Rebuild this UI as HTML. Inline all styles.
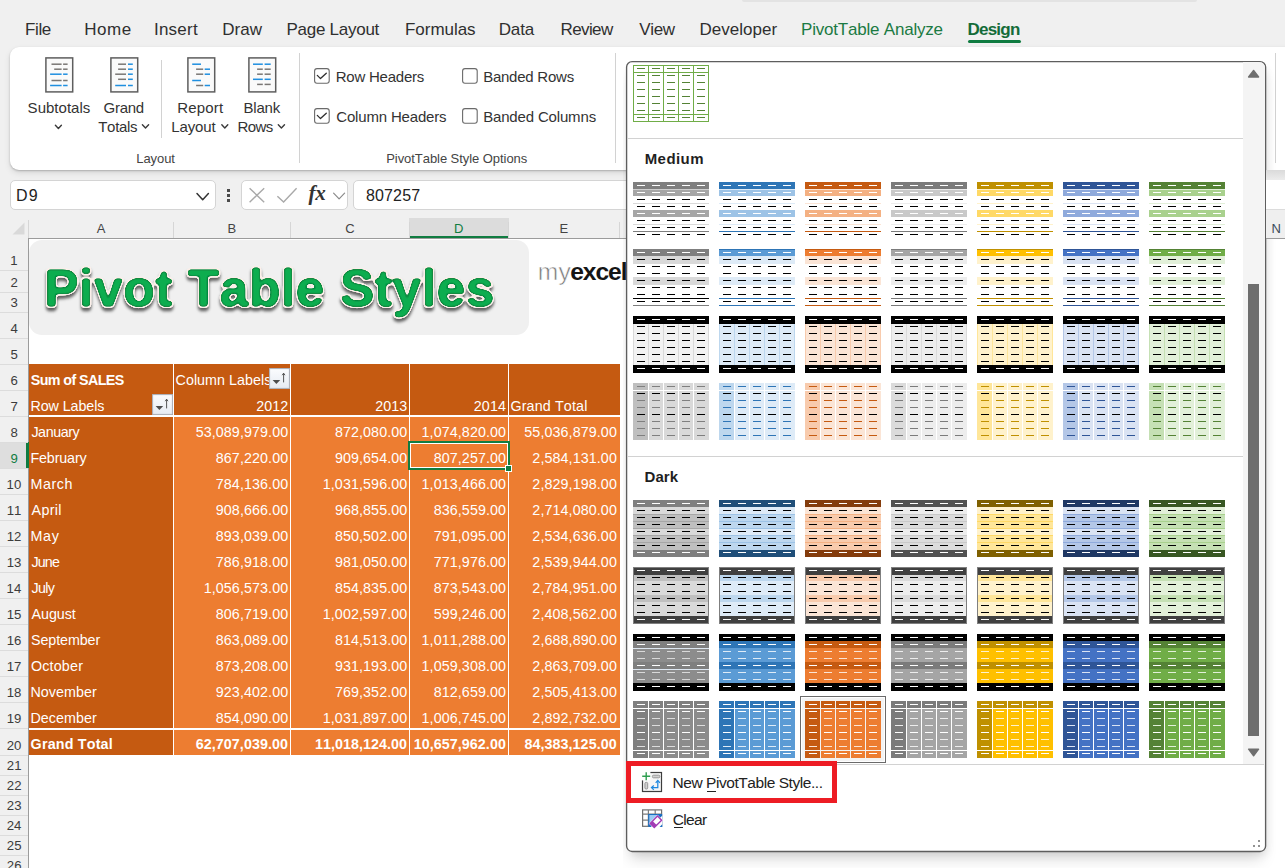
<!DOCTYPE html>
<html><head><meta charset="utf-8"><title>Pivot Table Styles</title>
<style>
html,body{margin:0;padding:0}
html{width:1285px;height:868px;overflow:hidden}
body{width:1285px;height:868px;overflow:hidden;background:#f0f0f0;position:relative;font-family:"Liberation Sans",sans-serif;font-kerning:none}
.t{position:absolute;white-space:pre;font-kerning:none!important;font-variant-ligatures:none!important}
.b{position:absolute;box-sizing:border-box}
svg{position:absolute;overflow:visible}
</style></head><body><div id="root" style="position:absolute;left:0;top:0;width:1285px;height:868px;overflow:hidden;background:#f0f0f0">

<div class="t" style="left:25.11px;top:19.11px;font:17px/22px 'Liberation Sans',sans-serif;color:#2f2f2f;letter-spacing:-0.414px;">File</div>
<div class="t" style="left:84.31px;top:19.11px;font:17px/22px 'Liberation Sans',sans-serif;color:#2f2f2f;letter-spacing:0.534px;">Home</div>
<div class="t" style="left:154.03px;top:19.11px;font:17px/22px 'Liberation Sans',sans-serif;color:#2f2f2f;letter-spacing:0.215px;">Insert</div>
<div class="t" style="left:222.21px;top:19.11px;font:17px/22px 'Liberation Sans',sans-serif;color:#2f2f2f;letter-spacing:0.028px;">Draw</div>
<div class="t" style="left:286.41px;top:19.11px;font:17px/22px 'Liberation Sans',sans-serif;color:#2f2f2f;letter-spacing:-0.255px;">Page Layout</div>
<div class="t" style="left:405.01px;top:19.11px;font:17px/22px 'Liberation Sans',sans-serif;color:#2f2f2f;letter-spacing:-0.034px;">Formulas</div>
<div class="t" style="left:498.71px;top:19.11px;font:17px/22px 'Liberation Sans',sans-serif;color:#2f2f2f;letter-spacing:-0.138px;">Data</div>
<div class="t" style="left:560.61px;top:19.11px;font:17px/22px 'Liberation Sans',sans-serif;color:#2f2f2f;letter-spacing:-0.637px;">Review</div>
<div class="t" style="left:639.23px;top:19.11px;font:17px/22px 'Liberation Sans',sans-serif;color:#2f2f2f;letter-spacing:-0.338px;">View</div>
<div class="t" style="left:699.51px;top:19.11px;font:17px/22px 'Liberation Sans',sans-serif;color:#2f2f2f;letter-spacing:0.024px;">Developer</div>
<div class="t" style="left:801.01px;top:19.11px;font:17px/22px 'Liberation Sans',sans-serif;color:#1b7a43;letter-spacing:-0.204px;">PivotTable Analyze</div>
<div class="t" style="left:967.46px;top:19.11px;font:bold 17px/22px 'Liberation Sans',sans-serif;color:#146c39;letter-spacing:-0.757px;">Design</div>
<div class="b" style="left:968px;top:40px;width:53px;height:3px;background:#107c41;border-radius:1.5px"></div>
<div class="b" style="left:742px;top:0px;width:455px;height:1.5px;background:#e3e3e3;border-radius:0 0 2px 2px"></div>
<div class="b" style="left:10px;top:47px;width:1300px;height:123px;background:#fff;border-radius:9px 0 0 9px;box-shadow:0 1px 2px rgba(0,0,0,.22),0 3px 6px rgba(0,0,0,.10)"></div>
<div class="b" style="left:161px;top:60px;width:1px;height:78px;background:#d2d2d2"></div>
<div class="b" style="left:299px;top:53px;width:1px;height:110px;background:#d2d2d2"></div>
<div class="b" style="left:615px;top:53px;width:1px;height:110px;background:#d2d2d2"></div>
<div class="b" style="left:1275px;top:53px;width:1px;height:110px;background:#d2d2d2"></div>
<svg style="left:45px;top:57px" width="29" height="36" viewBox="0 0 29 36"><rect x="0.9" y="0.9" width="26.8" height="34" fill="#fafafa" stroke="#5e5e5e" stroke-width="1.5"/><rect x="6.5" y="6.45" width="10.1" height="1.5" fill="#7a7775"/><rect x="18.1" y="6.45" width="4.5" height="1.5" fill="#7a7775"/><rect x="9.2" y="11.45" width="7.4" height="1.5" fill="#7a7775"/><rect x="18.1" y="11.45" width="4.5" height="1.5" fill="#7a7775"/><rect x="5.1" y="16.45" width="11.5" height="1.5" fill="#1f8fe0"/><rect x="18.1" y="16.45" width="4.5" height="1.5" fill="#1f8fe0"/><rect x="6.5" y="22.75" width="10.1" height="1.5" fill="#7a7775"/><rect x="18.1" y="22.75" width="4.5" height="1.5" fill="#7a7775"/><rect x="5.1" y="27.75" width="11.5" height="1.5" fill="#1f8fe0"/><rect x="18.1" y="27.75" width="4.5" height="1.5" fill="#1f8fe0"/></svg>
<svg style="left:110px;top:57px" width="29" height="36" viewBox="0 0 29 36"><rect x="0.9" y="0.9" width="26.8" height="34" fill="#fafafa" stroke="#5e5e5e" stroke-width="1.5"/><rect x="8.1" y="6.45" width="7.9" height="1.5" fill="#7a7775"/><rect x="18.0" y="6.45" width="4.8" height="1.5" fill="#1f8fe0"/><rect x="8.1" y="11.45" width="7.9" height="1.5" fill="#7a7775"/><rect x="18.0" y="11.45" width="4.8" height="1.5" fill="#1f8fe0"/><rect x="5.2" y="16.45" width="10.8" height="1.5" fill="#7a7775"/><rect x="18.0" y="16.45" width="4.8" height="1.5" fill="#1f8fe0"/><rect x="8.1" y="21.55" width="7.9" height="1.5" fill="#7a7775"/><rect x="18.0" y="21.55" width="4.8" height="1.5" fill="#1f8fe0"/><rect x="5.2" y="27.75" width="10.8" height="1.5" fill="#1f8fe0"/><rect x="18.0" y="27.75" width="4.8" height="1.5" fill="#1f8fe0"/></svg>
<svg style="left:187px;top:57px" width="29" height="36" viewBox="0 0 29 36"><rect x="0.9" y="0.9" width="26.8" height="34" fill="#fafafa" stroke="#5e5e5e" stroke-width="1.5"/><rect x="5.2" y="6.45" width="8.8" height="1.5" fill="#1f8fe0"/><rect x="9.1" y="11.45" width="7.1" height="1.5" fill="#7a7775"/><rect x="17.7" y="11.45" width="5.3" height="1.5" fill="#1f8fe0"/><rect x="9.1" y="16.45" width="7.1" height="1.5" fill="#7a7775"/><rect x="17.7" y="16.45" width="5.3" height="1.5" fill="#1f8fe0"/><rect x="5.2" y="22.75" width="8.8" height="1.5" fill="#1f8fe0"/><rect x="9.1" y="27.75" width="7.1" height="1.5" fill="#7a7775"/><rect x="17.7" y="27.75" width="5.3" height="1.5" fill="#1f8fe0"/></svg>
<svg style="left:248px;top:57px" width="29" height="36" viewBox="0 0 29 36"><rect x="0.9" y="0.9" width="26.8" height="34" fill="#fafafa" stroke="#5e5e5e" stroke-width="1.5"/><rect x="5.0" y="6.45" width="9.8" height="1.5" fill="#1f8fe0"/><rect x="16.6" y="6.45" width="6.1" height="1.5" fill="#1f8fe0"/><rect x="9.1" y="11.45" width="5.7" height="1.5" fill="#7a7775"/><rect x="16.6" y="11.45" width="6.1" height="1.5" fill="#7a7775"/><rect x="9.1" y="16.45" width="5.7" height="1.5" fill="#7a7775"/><rect x="16.6" y="16.45" width="6.1" height="1.5" fill="#7a7775"/><rect x="5.0" y="21.55" width="9.8" height="1.5" fill="#1f8fe0"/><rect x="16.6" y="21.55" width="6.1" height="1.5" fill="#1f8fe0"/><rect x="9.1" y="26.65" width="5.7" height="1.5" fill="#7a7775"/><rect x="16.6" y="26.65" width="6.1" height="1.5" fill="#7a7775"/></svg>
<div class="t" style="left:27.62px;top:97.80px;font:15px/20px 'Liberation Sans',sans-serif;color:#333;letter-spacing:0.023px;">Subtotals</div>
<div class="t" style="left:103.55px;top:97.80px;font:15px/20px 'Liberation Sans',sans-serif;color:#333;letter-spacing:-0.267px;">Grand</div>
<div class="t" style="left:98.26px;top:117.30px;font:15px/20px 'Liberation Sans',sans-serif;color:#333;letter-spacing:-0.314px;">Totals</div>
<div class="t" style="left:177.27px;top:97.80px;font:15px/20px 'Liberation Sans',sans-serif;color:#333;letter-spacing:0.164px;">Report</div>
<div class="t" style="left:171.27px;top:117.30px;font:15px/20px 'Liberation Sans',sans-serif;color:#333;letter-spacing:-0.139px;">Layout</div>
<div class="t" style="left:243.47px;top:97.80px;font:15px/20px 'Liberation Sans',sans-serif;color:#333;letter-spacing:-0.178px;">Blank</div>
<div class="t" style="left:237.47px;top:117.30px;font:15px/20px 'Liberation Sans',sans-serif;color:#333;letter-spacing:-0.545px;">Rows</div>
<svg style="left:0;top:0" width="1" height="1"><path d="M55.4 125.2L58.4 128.4L61.4 125.2" fill="none" stroke="#3a3a3a" stroke-width="1.4" stroke-linecap="round" stroke-linejoin="round"/></svg>
<svg style="left:0;top:0" width="1" height="1"><path d="M142.4 124.8L145.5 128L148.6 124.8" fill="none" stroke="#3a3a3a" stroke-width="1.4" stroke-linecap="round" stroke-linejoin="round"/></svg>
<svg style="left:0;top:0" width="1" height="1"><path d="M221.8 124.8L224.8 128L227.8 124.8" fill="none" stroke="#3a3a3a" stroke-width="1.4" stroke-linecap="round" stroke-linejoin="round"/></svg>
<svg style="left:0;top:0" width="1" height="1"><path d="M278.3 124.8L281.4 128L284.5 124.8" fill="none" stroke="#3a3a3a" stroke-width="1.4" stroke-linecap="round" stroke-linejoin="round"/></svg>
<div class="t" style="left:136.33px;top:150.00px;font:13px/17px 'Liberation Sans',sans-serif;color:#444;letter-spacing:-0.094px;">Layout</div>
<div class="t" style="left:386.23px;top:150.00px;font:13px/17px 'Liberation Sans',sans-serif;color:#444;letter-spacing:-0.057px;">PivotTable Style Options</div>
<svg style="left:314px;top:68.2px" width="16" height="16" viewBox="0 0 16 16"><rect x="0.6" y="0.6" width="14.6" height="14.6" rx="2.4" fill="#fff" stroke="#6a6a6a" stroke-width="1.1"/><path d="M3.3 7.4L6.5 10.6L12.3 5.2" fill="none" stroke="#2f2f2f" stroke-width="1.3" stroke-linecap="round" stroke-linejoin="round"/></svg>
<svg style="left:314px;top:108.2px" width="16" height="16" viewBox="0 0 16 16"><rect x="0.6" y="0.6" width="14.6" height="14.6" rx="2.4" fill="#fff" stroke="#6a6a6a" stroke-width="1.1"/><path d="M3.3 7.4L6.5 10.6L12.3 5.2" fill="none" stroke="#2f2f2f" stroke-width="1.3" stroke-linecap="round" stroke-linejoin="round"/></svg>
<svg style="left:462px;top:68.2px" width="16" height="16" viewBox="0 0 16 16"><rect x="0.6" y="0.6" width="14.6" height="14.6" rx="2.4" fill="#fff" stroke="#6a6a6a" stroke-width="1.1"/></svg>
<svg style="left:462px;top:108.2px" width="16" height="16" viewBox="0 0 16 16"><rect x="0.6" y="0.6" width="14.6" height="14.6" rx="2.4" fill="#fff" stroke="#6a6a6a" stroke-width="1.1"/></svg>
<div class="t" style="left:335.77px;top:66.80px;font:15px/20px 'Liberation Sans',sans-serif;color:#333;letter-spacing:-0.230px;">Row Headers</div>
<div class="t" style="left:336.24px;top:106.80px;font:15px/20px 'Liberation Sans',sans-serif;color:#333;letter-spacing:-0.173px;">Column Headers</div>
<div class="t" style="left:483.17px;top:66.80px;font:15px/20px 'Liberation Sans',sans-serif;color:#333;letter-spacing:-0.242px;">Banded Rows</div>
<div class="t" style="left:483.17px;top:106.80px;font:15px/20px 'Liberation Sans',sans-serif;color:#333;letter-spacing:-0.161px;">Banded Columns</div>
<div class="b" style="left:10px;top:180px;width:206px;height:29.5px;background:#fff;border:1px solid #d4d4d4;border-radius:5px"></div>
<div class="t" style="left:15.89px;top:184.66px;font:16px/21px 'Liberation Sans',sans-serif;color:#222;letter-spacing:1.417px;">D9</div>
<svg style="left:0;top:0" width="1" height="1"><path d="M197 193.6L202.7 199.8L208.4 193.6" fill="none" stroke="#333" stroke-width="1.5" stroke-linecap="round" stroke-linejoin="round"/></svg>
<div class="b" style="left:227px;top:189.3px;width:3px;height:3px;background:#4a4a4a"></div>
<div class="b" style="left:227px;top:194.2px;width:3px;height:3px;background:#4a4a4a"></div>
<div class="b" style="left:227px;top:199.1px;width:3px;height:3px;background:#4a4a4a"></div>
<div class="b" style="left:241px;top:180px;width:107px;height:29.5px;background:#fff;border:1px solid #d4d4d4;border-radius:5px"></div>
<svg style="left:0;top:0" width="1" height="1"><path d="M249.6 188.2L264.2 202.2M264.2 188.2L249.6 202.2" stroke="#a9a9a9" stroke-width="1.4" fill="none"/><path d="M277.4 196.2L283.6 202L296.6 188.2" stroke="#a9a9a9" stroke-width="1.4" fill="none"/></svg>
<div class="t" style="left:308.40px;top:179.71px;font:italic bold 21px/27px 'Liberation Serif',serif;color:#333;letter-spacing:-0.180px;">fx</div>
<svg style="left:0;top:0" width="1" height="1"><path d="M333.6 193.2L339.1 198.8L344.6 193.2" fill="none" stroke="#8a8a8a" stroke-width="1.2" stroke-linecap="round" stroke-linejoin="round"/></svg>
<div class="b" style="left:353px;top:180px;width:940px;height:29.5px;background:#fff;border:1px solid #d4d4d4;border-radius:5px"></div>
<div class="t" style="left:365.90px;top:184.76px;font:16px/21px 'Liberation Sans',sans-serif;color:#222;letter-spacing:0.162px;">807257</div>
<div class="b" style="left:29px;top:239px;width:1260px;height:640px;background:#fff"></div>
<div class="b" style="left:409px;top:218px;width:100px;height:20px;background:#dcdcdc"></div>
<div class="b" style="left:409px;top:236px;width:100px;height:3px;background:#107c41"></div>
<div class="t" style="left:96.66px;top:220.20px;font:13px/17px 'Liberation Sans',sans-serif;color:#444;letter-spacing:0.000px;">A</div>
<div class="t" style="left:227.47px;top:220.20px;font:13px/17px 'Liberation Sans',sans-serif;color:#444;letter-spacing:0.000px;">B</div>
<div class="t" style="left:345.22px;top:220.20px;font:13px/17px 'Liberation Sans',sans-serif;color:#444;letter-spacing:0.000px;">C</div>
<div class="t" style="left:559.41px;top:220.20px;font:13px/17px 'Liberation Sans',sans-serif;color:#444;letter-spacing:0.000px;">E</div>
<div class="t" style="left:454.08px;top:220.20px;font:13px/17px 'Liberation Sans',sans-serif;color:#107c41;letter-spacing:0.000px;">D</div>
<div class="b" style="left:173px;top:222px;width:1px;height:16px;background:#d6d6d6"></div>
<div class="b" style="left:290px;top:222px;width:1px;height:16px;background:#d6d6d6"></div>
<div class="b" style="left:409px;top:222px;width:1px;height:16px;background:#d6d6d6"></div>
<div class="b" style="left:508px;top:222px;width:1px;height:16px;background:#d6d6d6"></div>
<div class="b" style="left:619px;top:222px;width:1px;height:16px;background:#d6d6d6"></div>
<div class="b" style="left:28px;top:238px;width:600px;height:1px;background:#9b9b9b"></div>
<div class="b" style="left:28px;top:238px;width:1px;height:640px;background:#9b9b9b"></div>
<div class="b" style="left:28px;top:220px;width:1px;height:18px;background:#d6d6d6"></div>
<svg style="left:0;top:0" width="1" height="1"><path d="M12.5 234.5L24.5 234.5L24.5 222.5Z" fill="#d9d9d9"/></svg>
<div class="b" style="left:0px;top:442px;width:28px;height:26px;background:#dedede"></div>
<div class="b" style="left:26px;top:442px;width:3px;height:26px;background:#107c41"></div>
<div class="b" style="left:0px;top:270px;width:28px;height:1px;background:#dcdcdc"></div>
<div class="t" style="left:10.35px;top:251.73px;font:13.2px/17px 'Liberation Sans',sans-serif;color:#3c3c3c;letter-spacing:-0.000px;">1</div>
<div class="b" style="left:0px;top:292px;width:28px;height:1px;background:#dcdcdc"></div>
<div class="t" style="left:10.53px;top:273.73px;font:13.2px/17px 'Liberation Sans',sans-serif;color:#3c3c3c;letter-spacing:-0.000px;">2</div>
<div class="b" style="left:0px;top:312px;width:28px;height:1px;background:#dcdcdc"></div>
<div class="t" style="left:10.57px;top:293.73px;font:13.2px/17px 'Liberation Sans',sans-serif;color:#3c3c3c;letter-spacing:-0.000px;">3</div>
<div class="b" style="left:0px;top:338px;width:28px;height:1px;background:#dcdcdc"></div>
<div class="t" style="left:10.57px;top:319.73px;font:13.2px/17px 'Liberation Sans',sans-serif;color:#3c3c3c;letter-spacing:-0.000px;">4</div>
<div class="b" style="left:0px;top:364px;width:28px;height:1px;background:#dcdcdc"></div>
<div class="t" style="left:10.54px;top:345.73px;font:13.2px/17px 'Liberation Sans',sans-serif;color:#3c3c3c;letter-spacing:-0.000px;">5</div>
<div class="b" style="left:0px;top:390px;width:28px;height:1px;background:#dcdcdc"></div>
<div class="t" style="left:10.48px;top:371.73px;font:13.2px/17px 'Liberation Sans',sans-serif;color:#3c3c3c;letter-spacing:0.000px;">6</div>
<div class="b" style="left:0px;top:416px;width:28px;height:1px;background:#dcdcdc"></div>
<div class="t" style="left:10.52px;top:397.73px;font:13.2px/17px 'Liberation Sans',sans-serif;color:#3c3c3c;letter-spacing:-0.000px;">7</div>
<div class="b" style="left:0px;top:442px;width:28px;height:1px;background:#dcdcdc"></div>
<div class="t" style="left:10.53px;top:423.73px;font:13.2px/17px 'Liberation Sans',sans-serif;color:#3c3c3c;letter-spacing:-0.000px;">8</div>
<div class="b" style="left:0px;top:468px;width:28px;height:1px;background:#dcdcdc"></div>
<div class="t" style="left:10.53px;top:449.73px;font:13.2px/17px 'Liberation Sans',sans-serif;color:#107c41;letter-spacing:-0.000px;">9</div>
<div class="b" style="left:0px;top:494px;width:28px;height:1px;background:#dcdcdc"></div>
<div class="t" style="left:6.61px;top:475.73px;font:13.2px/17px 'Liberation Sans',sans-serif;color:#3c3c3c;letter-spacing:-0.000px;">10</div>
<div class="b" style="left:0px;top:520px;width:28px;height:1px;background:#dcdcdc"></div>
<div class="t" style="left:6.68px;top:501.73px;font:13.2px/17px 'Liberation Sans',sans-serif;color:#3c3c3c;letter-spacing:-0.000px;">11</div>
<div class="b" style="left:0px;top:546px;width:28px;height:1px;background:#dcdcdc"></div>
<div class="t" style="left:6.69px;top:527.73px;font:13.2px/17px 'Liberation Sans',sans-serif;color:#3c3c3c;letter-spacing:0.000px;">12</div>
<div class="b" style="left:0px;top:572px;width:28px;height:1px;background:#dcdcdc"></div>
<div class="t" style="left:6.65px;top:553.73px;font:13.2px/17px 'Liberation Sans',sans-serif;color:#3c3c3c;letter-spacing:-0.000px;">13</div>
<div class="b" style="left:0px;top:598px;width:28px;height:1px;background:#dcdcdc"></div>
<div class="t" style="left:6.55px;top:579.73px;font:13.2px/17px 'Liberation Sans',sans-serif;color:#3c3c3c;letter-spacing:-0.000px;">14</div>
<div class="b" style="left:0px;top:624px;width:28px;height:1px;background:#dcdcdc"></div>
<div class="t" style="left:6.63px;top:605.73px;font:13.2px/17px 'Liberation Sans',sans-serif;color:#3c3c3c;letter-spacing:0.000px;">15</div>
<div class="b" style="left:0px;top:650px;width:28px;height:1px;background:#dcdcdc"></div>
<div class="t" style="left:6.65px;top:631.73px;font:13.2px/17px 'Liberation Sans',sans-serif;color:#3c3c3c;letter-spacing:-0.000px;">16</div>
<div class="b" style="left:0px;top:676px;width:28px;height:1px;background:#dcdcdc"></div>
<div class="t" style="left:6.69px;top:657.73px;font:13.2px/17px 'Liberation Sans',sans-serif;color:#3c3c3c;letter-spacing:0.000px;">17</div>
<div class="b" style="left:0px;top:702px;width:28px;height:1px;background:#dcdcdc"></div>
<div class="t" style="left:6.64px;top:683.73px;font:13.2px/17px 'Liberation Sans',sans-serif;color:#3c3c3c;letter-spacing:-0.000px;">18</div>
<div class="b" style="left:0px;top:728px;width:28px;height:1px;background:#dcdcdc"></div>
<div class="t" style="left:6.67px;top:709.73px;font:13.2px/17px 'Liberation Sans',sans-serif;color:#3c3c3c;letter-spacing:0.000px;">19</div>
<div class="b" style="left:0px;top:755px;width:28px;height:1px;background:#dcdcdc"></div>
<div class="t" style="left:6.78px;top:736.73px;font:13.2px/17px 'Liberation Sans',sans-serif;color:#3c3c3c;letter-spacing:0.000px;">20</div>
<div class="b" style="left:0px;top:775px;width:28px;height:1px;background:#dcdcdc"></div>
<div class="t" style="left:6.85px;top:756.73px;font:13.2px/17px 'Liberation Sans',sans-serif;color:#3c3c3c;letter-spacing:0.000px;">21</div>
<div class="b" style="left:0px;top:795px;width:28px;height:1px;background:#dcdcdc"></div>
<div class="t" style="left:6.86px;top:776.73px;font:13.2px/17px 'Liberation Sans',sans-serif;color:#3c3c3c;letter-spacing:0.000px;">22</div>
<div class="b" style="left:0px;top:815px;width:28px;height:1px;background:#dcdcdc"></div>
<div class="t" style="left:6.82px;top:796.73px;font:13.2px/17px 'Liberation Sans',sans-serif;color:#3c3c3c;letter-spacing:0.000px;">23</div>
<div class="b" style="left:0px;top:835px;width:28px;height:1px;background:#dcdcdc"></div>
<div class="t" style="left:6.72px;top:816.73px;font:13.2px/17px 'Liberation Sans',sans-serif;color:#3c3c3c;letter-spacing:0.000px;">24</div>
<div class="b" style="left:0px;top:855px;width:28px;height:1px;background:#dcdcdc"></div>
<div class="t" style="left:6.80px;top:836.73px;font:13.2px/17px 'Liberation Sans',sans-serif;color:#3c3c3c;letter-spacing:0.000px;">25</div>
<div class="b" style="left:0px;top:875px;width:28px;height:1px;background:#dcdcdc"></div>
<div class="t" style="left:6.82px;top:856.73px;font:13.2px/17px 'Liberation Sans',sans-serif;color:#3c3c3c;letter-spacing:0.000px;">26</div>
<div class="b" style="left:29px;top:240px;width:499.5px;height:94.5px;background:#f0f0f0;border-radius:13px"></div>
<svg style="left:0;top:0" width="640" height="360" viewBox="0 0 640 360"><defs>
<filter id="tsh" x="-5%" y="-20%" width="110%" height="150%"><feGaussianBlur stdDeviation="1.35"/><feComponentTransfer><feFuncA type="linear" slope="8" intercept="-3.4"/></feComponentTransfer><feDropShadow dx="0" dy="3.2" stdDeviation="1.6" flood-color="#000" flood-opacity=".6"/></filter>
<filter id="rnd" x="-5%" y="-20%" width="110%" height="140%"><feGaussianBlur stdDeviation="1.35"/><feComponentTransfer><feFuncA type="linear" slope="8" intercept="-3.4"/></feComponentTransfer></filter>
<filter id="rnd2" x="-5%" y="-20%" width="110%" height="140%"><feGaussianBlur stdDeviation="1.5"/><feComponentTransfer><feFuncA type="linear" slope="3" intercept="-1.45"/></feComponentTransfer></filter>
</defs>
<text x="44.15" y="305.6" font-family="'Liberation Sans',sans-serif" font-weight="bold" font-size="51.5" letter-spacing="0.564" style="font-kerning:none;white-space:pre" stroke-linejoin="round" fill="#fbefe9" stroke="#fbefe9" stroke-width="3.4" filter="url(#tsh)">Pivot Table Styles</text>
<text x="44.15" y="305.6" font-family="'Liberation Sans',sans-serif" font-weight="bold" font-size="51.5" letter-spacing="0.564" style="font-kerning:none;white-space:pre" stroke-linejoin="round" fill="#0a8a41" stroke="#0a8a41" stroke-width="0.9" filter="url(#rnd)">Pivot Table Styles</text>
<text x="44.15" y="305.6" font-family="'Liberation Sans',sans-serif" font-weight="bold" font-size="51.5" letter-spacing="0.564" style="font-kerning:none;white-space:pre" stroke-linejoin="round" fill="#07ad50" filter="url(#rnd2)">Pivot Table Styles</text>
</svg>
<div class="b" style="left:530px;top:250px;width:96px;height:50px;overflow:hidden">
<div class="t" style="left:7.77px;top:6.28px;font:24.6px/32px 'Liberation Sans',sans-serif;color:#7c7c7c;letter-spacing:0.3px;-webkit-text-stroke:0.55px #fff">my</div>
<div class="t" style="left:40.20px;top:6.28px;font:bold 24.6px/32px 'Liberation Sans',sans-serif;color:#151515;letter-spacing:-1.05px">excel</div>
</div>
<div class="b" style="left:29px;top:364px;width:591px;height:52px;background:#c55a11"></div>
<div class="b" style="left:29px;top:416px;width:144px;height:339px;background:#c55a11"></div>
<div class="b" style="left:173px;top:416px;width:447px;height:339px;background:#ed7d31"></div>
<div class="b" style="left:172.5px;top:364px;width:1.5px;height:391px;background:#fff"></div>
<div class="b" style="left:289.5px;top:364px;width:1.5px;height:391px;background:#fff"></div>
<div class="b" style="left:408.5px;top:364px;width:1.5px;height:391px;background:#fff"></div>
<div class="b" style="left:507.5px;top:364px;width:1.5px;height:391px;background:#fff"></div>
<div class="b" style="left:29px;top:415px;width:591px;height:2px;background:#fff"></div>
<div class="b" style="left:29px;top:727.5px;width:591px;height:2px;background:#fff"></div>
<div class="t" style="left:30.79px;top:370.55px;font:bold 14.3px/19px 'Liberation Sans',sans-serif;color:#fff;letter-spacing:-0.594px;">Sum of SALES</div>
<div class="t" style="left:30.43px;top:396.55px;font:14.3px/19px 'Liberation Sans',sans-serif;color:#fff;letter-spacing:-0.070px;">Row Labels</div>
<div class="b" style="left:174px;top:366px;width:96px;height:24px;overflow:hidden">
<div class="t" style="left:1.57px;top:4.55px;font:14.3px/19px 'Liberation Sans',sans-serif;color:#fff;letter-spacing:0.030px">Column Labels</div></div>
<div class="t" style="left:510.48px;top:396.55px;font:14.3px/19px 'Liberation Sans',sans-serif;color:#fff;letter-spacing:0.137px;">Grand Total</div>
<div class="t" style="left:31.38px;top:422.75px;font:14.3px/19px 'Liberation Sans',sans-serif;color:#fff;letter-spacing:-0.420px;">January</div>
<div class="t" style="left:195.63px;top:422.75px;font:14.3px/19px 'Liberation Sans',sans-serif;color:#fff;letter-spacing:0.090px;">53,089,979.00</div>
<div class="t" style="left:334.88px;top:422.75px;font:14.3px/19px 'Liberation Sans',sans-serif;color:#fff;letter-spacing:0.090px;">872,080.00</div>
<div class="t" style="left:421.57px;top:422.75px;font:14.3px/19px 'Liberation Sans',sans-serif;color:#fff;letter-spacing:0.090px;">1,074,820.00</div>
<div class="t" style="left:524.33px;top:422.75px;font:14.3px/19px 'Liberation Sans',sans-serif;color:#fff;letter-spacing:0.090px;">55,036,879.00</div>
<div class="t" style="left:30.43px;top:448.75px;font:14.3px/19px 'Liberation Sans',sans-serif;color:#fff;letter-spacing:-0.131px;">February</div>
<div class="t" style="left:215.78px;top:448.75px;font:14.3px/19px 'Liberation Sans',sans-serif;color:#fff;letter-spacing:0.090px;">867,220.00</div>
<div class="t" style="left:334.88px;top:448.75px;font:14.3px/19px 'Liberation Sans',sans-serif;color:#fff;letter-spacing:0.090px;">909,654.00</div>
<div class="t" style="left:433.68px;top:448.75px;font:14.3px/19px 'Liberation Sans',sans-serif;color:#fff;letter-spacing:0.090px;">807,257.00</div>
<div class="t" style="left:532.37px;top:448.75px;font:14.3px/19px 'Liberation Sans',sans-serif;color:#fff;letter-spacing:0.090px;">2,584,131.00</div>
<div class="t" style="left:30.43px;top:474.75px;font:14.3px/19px 'Liberation Sans',sans-serif;color:#fff;letter-spacing:0.568px;">March</div>
<div class="t" style="left:215.78px;top:474.75px;font:14.3px/19px 'Liberation Sans',sans-serif;color:#fff;letter-spacing:0.090px;">784,136.00</div>
<div class="t" style="left:322.77px;top:474.75px;font:14.3px/19px 'Liberation Sans',sans-serif;color:#fff;letter-spacing:0.090px;">1,031,596.00</div>
<div class="t" style="left:421.57px;top:474.75px;font:14.3px/19px 'Liberation Sans',sans-serif;color:#fff;letter-spacing:0.090px;">1,013,466.00</div>
<div class="t" style="left:532.37px;top:474.75px;font:14.3px/19px 'Liberation Sans',sans-serif;color:#fff;letter-spacing:0.090px;">2,829,198.00</div>
<div class="t" style="left:31.57px;top:500.75px;font:14.3px/19px 'Liberation Sans',sans-serif;color:#fff;letter-spacing:0.319px;">April</div>
<div class="t" style="left:215.78px;top:500.75px;font:14.3px/19px 'Liberation Sans',sans-serif;color:#fff;letter-spacing:0.090px;">908,666.00</div>
<div class="t" style="left:334.88px;top:500.75px;font:14.3px/19px 'Liberation Sans',sans-serif;color:#fff;letter-spacing:0.090px;">968,855.00</div>
<div class="t" style="left:433.68px;top:500.75px;font:14.3px/19px 'Liberation Sans',sans-serif;color:#fff;letter-spacing:0.090px;">836,559.00</div>
<div class="t" style="left:532.37px;top:500.75px;font:14.3px/19px 'Liberation Sans',sans-serif;color:#fff;letter-spacing:0.090px;">2,714,080.00</div>
<div class="t" style="left:30.43px;top:526.75px;font:14.3px/19px 'Liberation Sans',sans-serif;color:#fff;letter-spacing:0.793px;">May</div>
<div class="t" style="left:215.78px;top:526.75px;font:14.3px/19px 'Liberation Sans',sans-serif;color:#fff;letter-spacing:0.090px;">893,039.00</div>
<div class="t" style="left:334.88px;top:526.75px;font:14.3px/19px 'Liberation Sans',sans-serif;color:#fff;letter-spacing:0.090px;">850,502.00</div>
<div class="t" style="left:433.68px;top:526.75px;font:14.3px/19px 'Liberation Sans',sans-serif;color:#fff;letter-spacing:0.090px;">791,095.00</div>
<div class="t" style="left:532.37px;top:526.75px;font:14.3px/19px 'Liberation Sans',sans-serif;color:#fff;letter-spacing:0.090px;">2,534,636.00</div>
<div class="t" style="left:31.38px;top:552.75px;font:14.3px/19px 'Liberation Sans',sans-serif;color:#fff;letter-spacing:-0.817px;">June</div>
<div class="t" style="left:215.78px;top:552.75px;font:14.3px/19px 'Liberation Sans',sans-serif;color:#fff;letter-spacing:0.090px;">786,918.00</div>
<div class="t" style="left:334.88px;top:552.75px;font:14.3px/19px 'Liberation Sans',sans-serif;color:#fff;letter-spacing:0.090px;">981,050.00</div>
<div class="t" style="left:433.68px;top:552.75px;font:14.3px/19px 'Liberation Sans',sans-serif;color:#fff;letter-spacing:0.090px;">771,976.00</div>
<div class="t" style="left:532.37px;top:552.75px;font:14.3px/19px 'Liberation Sans',sans-serif;color:#fff;letter-spacing:0.090px;">2,539,944.00</div>
<div class="t" style="left:31.38px;top:578.75px;font:14.3px/19px 'Liberation Sans',sans-serif;color:#fff;letter-spacing:-0.593px;">July</div>
<div class="t" style="left:203.67px;top:578.75px;font:14.3px/19px 'Liberation Sans',sans-serif;color:#fff;letter-spacing:0.090px;">1,056,573.00</div>
<div class="t" style="left:334.88px;top:578.75px;font:14.3px/19px 'Liberation Sans',sans-serif;color:#fff;letter-spacing:0.090px;">854,835.00</div>
<div class="t" style="left:433.68px;top:578.75px;font:14.3px/19px 'Liberation Sans',sans-serif;color:#fff;letter-spacing:0.090px;">873,543.00</div>
<div class="t" style="left:532.37px;top:578.75px;font:14.3px/19px 'Liberation Sans',sans-serif;color:#fff;letter-spacing:0.090px;">2,784,951.00</div>
<div class="t" style="left:31.57px;top:604.75px;font:14.3px/19px 'Liberation Sans',sans-serif;color:#fff;letter-spacing:-0.077px;">August</div>
<div class="t" style="left:215.78px;top:604.75px;font:14.3px/19px 'Liberation Sans',sans-serif;color:#fff;letter-spacing:0.090px;">806,719.00</div>
<div class="t" style="left:322.77px;top:604.75px;font:14.3px/19px 'Liberation Sans',sans-serif;color:#fff;letter-spacing:0.090px;">1,002,597.00</div>
<div class="t" style="left:433.68px;top:604.75px;font:14.3px/19px 'Liberation Sans',sans-serif;color:#fff;letter-spacing:0.090px;">599,246.00</div>
<div class="t" style="left:532.37px;top:604.75px;font:14.3px/19px 'Liberation Sans',sans-serif;color:#fff;letter-spacing:0.090px;">2,408,562.00</div>
<div class="t" style="left:30.95px;top:630.75px;font:14.3px/19px 'Liberation Sans',sans-serif;color:#fff;letter-spacing:-0.083px;">September</div>
<div class="t" style="left:215.78px;top:630.75px;font:14.3px/19px 'Liberation Sans',sans-serif;color:#fff;letter-spacing:0.090px;">863,089.00</div>
<div class="t" style="left:334.88px;top:630.75px;font:14.3px/19px 'Liberation Sans',sans-serif;color:#fff;letter-spacing:0.090px;">814,513.00</div>
<div class="t" style="left:421.57px;top:630.75px;font:14.3px/19px 'Liberation Sans',sans-serif;color:#fff;letter-spacing:0.090px;">1,011,288.00</div>
<div class="t" style="left:532.37px;top:630.75px;font:14.3px/19px 'Liberation Sans',sans-serif;color:#fff;letter-spacing:0.090px;">2,688,890.00</div>
<div class="t" style="left:30.92px;top:656.75px;font:14.3px/19px 'Liberation Sans',sans-serif;color:#fff;letter-spacing:0.191px;">October</div>
<div class="t" style="left:215.78px;top:656.75px;font:14.3px/19px 'Liberation Sans',sans-serif;color:#fff;letter-spacing:0.090px;">873,208.00</div>
<div class="t" style="left:334.88px;top:656.75px;font:14.3px/19px 'Liberation Sans',sans-serif;color:#fff;letter-spacing:0.090px;">931,193.00</div>
<div class="t" style="left:421.57px;top:656.75px;font:14.3px/19px 'Liberation Sans',sans-serif;color:#fff;letter-spacing:0.090px;">1,059,308.00</div>
<div class="t" style="left:532.37px;top:656.75px;font:14.3px/19px 'Liberation Sans',sans-serif;color:#fff;letter-spacing:0.090px;">2,863,709.00</div>
<div class="t" style="left:30.43px;top:682.75px;font:14.3px/19px 'Liberation Sans',sans-serif;color:#fff;letter-spacing:0.050px;">November</div>
<div class="t" style="left:215.78px;top:682.75px;font:14.3px/19px 'Liberation Sans',sans-serif;color:#fff;letter-spacing:0.090px;">923,402.00</div>
<div class="t" style="left:334.88px;top:682.75px;font:14.3px/19px 'Liberation Sans',sans-serif;color:#fff;letter-spacing:0.090px;">769,352.00</div>
<div class="t" style="left:433.68px;top:682.75px;font:14.3px/19px 'Liberation Sans',sans-serif;color:#fff;letter-spacing:0.090px;">812,659.00</div>
<div class="t" style="left:532.37px;top:682.75px;font:14.3px/19px 'Liberation Sans',sans-serif;color:#fff;letter-spacing:0.090px;">2,505,413.00</div>
<div class="t" style="left:30.43px;top:708.75px;font:14.3px/19px 'Liberation Sans',sans-serif;color:#fff;letter-spacing:0.050px;">December</div>
<div class="t" style="left:215.78px;top:708.75px;font:14.3px/19px 'Liberation Sans',sans-serif;color:#fff;letter-spacing:0.090px;">854,090.00</div>
<div class="t" style="left:322.77px;top:708.75px;font:14.3px/19px 'Liberation Sans',sans-serif;color:#fff;letter-spacing:0.090px;">1,031,897.00</div>
<div class="t" style="left:421.57px;top:708.75px;font:14.3px/19px 'Liberation Sans',sans-serif;color:#fff;letter-spacing:0.090px;">1,006,745.00</div>
<div class="t" style="left:532.37px;top:708.75px;font:14.3px/19px 'Liberation Sans',sans-serif;color:#fff;letter-spacing:0.090px;">2,892,732.00</div>
<div class="t" style="left:256.24px;top:396.55px;font:14.3px/19px 'Liberation Sans',sans-serif;color:#fff;letter-spacing:0.090px;">2012</div>
<div class="t" style="left:375.25px;top:396.55px;font:14.3px/19px 'Liberation Sans',sans-serif;color:#fff;letter-spacing:0.090px;">2013</div>
<div class="t" style="left:473.84px;top:396.55px;font:14.3px/19px 'Liberation Sans',sans-serif;color:#fff;letter-spacing:0.090px;">2014</div>
<div class="t" style="left:30.61px;top:734.85px;font:bold 14.3px/19px 'Liberation Sans',sans-serif;color:#fff;letter-spacing:0.186px;">Grand Total</div>
<div class="t" style="left:195.78px;top:734.85px;font:bold 14.3px/19px 'Liberation Sans',sans-serif;color:#fff;letter-spacing:0.063px;">62,707,039.00</div>
<div class="t" style="left:314.88px;top:734.85px;font:bold 14.3px/19px 'Liberation Sans',sans-serif;color:#fff;letter-spacing:0.063px;">11,018,124.00</div>
<div class="t" style="left:413.68px;top:734.85px;font:bold 14.3px/19px 'Liberation Sans',sans-serif;color:#fff;letter-spacing:0.063px;">10,657,962.00</div>
<div class="t" style="left:524.48px;top:734.85px;font:bold 14.3px/19px 'Liberation Sans',sans-serif;color:#fff;letter-spacing:0.063px;">84,383,125.00</div>
<svg style="left:269px;top:368px" width="21" height="21" viewBox="0 0 21 21"><defs><linearGradient id="g269" x1="0" y1="0" x2="0" y2="1"><stop offset="0" stop-color="#fbfcfe"/><stop offset="1" stop-color="#e6ebf2"/></linearGradient></defs><rect x="0.6" y="0.6" width="19.8" height="19.8" fill="url(#g269)" stroke="#aab4c3" stroke-width="1"/><path d="M3.6 12L11.2 12L7.4 16Z" fill="#4d4d4d"/><path d="M14.6 14.4L14.6 5.4M13.2 7.2L14.6 5.2L16 7.2" stroke="#444" stroke-width="0.9" fill="none"/></svg>
<svg style="left:152px;top:394px" width="21" height="21" viewBox="0 0 21 21"><defs><linearGradient id="g152" x1="0" y1="0" x2="0" y2="1"><stop offset="0" stop-color="#fbfcfe"/><stop offset="1" stop-color="#e6ebf2"/></linearGradient></defs><rect x="0.6" y="0.6" width="19.8" height="19.8" fill="url(#g152)" stroke="#aab4c3" stroke-width="1"/><path d="M3.6 12L11.2 12L7.4 16Z" fill="#4d4d4d"/><path d="M14.6 14.4L14.6 5.4M13.2 7.2L14.6 5.2L16 7.2" stroke="#444" stroke-width="0.9" fill="none"/></svg>
<div class="b" style="left:408px;top:441px;width:102px;height:29px;border:2px solid #107c41;box-shadow:inset 0 0 0 1px #fff"></div>
<div class="b" style="left:505px;top:465px;width:7px;height:7px;background:#107c41;border:1px solid #fff"></div>
<div class="b" style="left:626px;top:61px;width:640px;height:791px;background:#fff;border-radius:6px;box-shadow:0 11px 16px -4px rgba(0,0,0,.14),3px 5px 10px -3px rgba(0,0,0,.10);clip-path:inset(-1px -30px -30px -3px)"></div>
<svg style="left:0;top:0" width="1285" height="868" viewBox="0 0 1285 868"><rect x="626.6" y="61.6" width="639" height="789.9" rx="5.5" fill="none" stroke="#5e5e5e" stroke-width="1.35"/></svg>
<div class="b" style="left:1243px;top:62px;width:21.5px;height:701.5px;background:#f4f4f4;border-radius:0 6px 0 0"></div>
<div class="b" style="left:1248px;top:284px;width:11px;height:452px;background:#6e6e6e"></div>
<svg style="left:0;top:0" width="1" height="1"><path d="M1248.6 77L1253.6 70.4L1258.6 77Z" fill="#6e6e6e" stroke="#6e6e6e" stroke-width="1.4" stroke-linejoin="round"/><path d="M1248.6 749.2L1253.6 755.8L1258.6 749.2Z" fill="#6e6e6e" stroke="#6e6e6e" stroke-width="1.4" stroke-linejoin="round"/></svg>
<div class="b" style="left:627px;top:138px;width:616px;height:1px;background:#d2d2d2"></div>
<div class="b" style="left:627px;top:456px;width:616px;height:1px;background:#d2d2d2"></div>
<div class="b" style="left:627px;top:764px;width:637px;height:1px;background:#d2d2d2"></div>
<div class="t" style="left:644.70px;top:148.60px;font:bold 15px/20px 'Liberation Sans',sans-serif;color:#1f1f1f;letter-spacing:0.433px;">Medium</div>
<div class="t" style="left:644.60px;top:466.80px;font:bold 15px/20px 'Liberation Sans',sans-serif;color:#1f1f1f;letter-spacing:0.011px;">Dark</div>
<div class="b" style="left:800px;top:696px;width:86px;height:67px;background:#f3f3f3;border:1px solid #6a6a6a;box-shadow:inset 0 0 0 1px #fff"></div>
<svg style="left:0;top:0" width="1285" height="868" viewBox="0 0 1285 868" shape-rendering="crispEdges">
<g transform="translate(633,65)"><rect x="0" y="0" width="76" height="1" fill="#70ad47"/><rect x="0" y="7" width="76" height="1" fill="#70ad47"/><rect x="0" y="49" width="76" height="1" fill="#70ad47"/><rect x="0" y="56" width="76" height="1" fill="#70ad47"/><rect x="0" y="0" width="1" height="57" fill="#70ad47"/><rect x="15" y="0" width="1" height="57" fill="#70ad47"/><rect x="30" y="0" width="1" height="57" fill="#70ad47"/><rect x="45" y="0" width="1" height="57" fill="#70ad47"/><rect x="60" y="0" width="1" height="57" fill="#70ad47"/><rect x="75" y="0" width="1" height="57" fill="#70ad47"/><path d="M4 3.5h8m7 0h8m7 0h8m7 0h8m7 0h8" stroke="#548235"/><path d="M4 10.5h8m7 0h8m7 0h8m7 0h8m7 0h8" stroke="#548235"/><path d="M4 17.5h8m7 0h8m7 0h8m7 0h8m7 0h8" stroke="#548235"/><path d="M4 24.5h8m7 0h8m7 0h8m7 0h8m7 0h8" stroke="#548235"/><path d="M4 31.5h8m7 0h8m7 0h8m7 0h8m7 0h8" stroke="#548235"/><path d="M4 38.5h8m7 0h8m7 0h8m7 0h8m7 0h8" stroke="#548235"/><path d="M4 45.5h8m7 0h8m7 0h8m7 0h8m7 0h8" stroke="#548235"/><path d="M4 52.5h8m7 0h8m7 0h8m7 0h8m7 0h8" stroke="#548235"/></g>
<g transform="translate(633,182)"><rect x="0" y="0" width="76" height="7" fill="#7f7f7f"/><rect x="0" y="7" width="76" height="1" fill="#cfcfcf"/><rect x="0" y="8" width="76" height="6.3" fill="#a6a6a6"/><rect x="0" y="21" width="76" height="1" fill="#d9d9d9"/><rect x="0" y="28" width="76" height="7" fill="#a6a6a6"/><rect x="0" y="42" width="76" height="1" fill="#d9d9d9"/><rect x="0" y="49" width="76" height="1" fill="#7f7f7f"/><path d="M4 3.5H72" stroke="#fff" stroke-dasharray="8 7"/><path d="M4 10.5H72" stroke="#fff" stroke-dasharray="8 7"/><path d="M4 17.5H72" stroke="#000" stroke-dasharray="8 7"/><path d="M4 24.5H72" stroke="#000" stroke-dasharray="8 7"/><path d="M4 31.5H72" stroke="#fff" stroke-dasharray="8 7"/><path d="M4 38.5H72" stroke="#000" stroke-dasharray="8 7"/><path d="M4 45.5H72" stroke="#000" stroke-dasharray="8 7"/><path d="M4 52.5H72" stroke="#000" stroke-dasharray="8 7"/></g>
<g transform="translate(719,182)"><rect x="0" y="0" width="76" height="7" fill="#2e75b6"/><rect x="0" y="7" width="76" height="1" fill="#deebf7"/><rect x="0" y="8" width="76" height="6.3" fill="#9dc3e6"/><rect x="0" y="21" width="76" height="1" fill="#deebf7"/><rect x="0" y="28" width="76" height="7" fill="#9dc3e6"/><rect x="0" y="42" width="76" height="1" fill="#deebf7"/><rect x="0" y="49" width="76" height="1" fill="#2e75b6"/><path d="M4 3.5H72" stroke="#fff" stroke-dasharray="8 7"/><path d="M4 10.5H72" stroke="#fff" stroke-dasharray="8 7"/><path d="M4 17.5H72" stroke="#000" stroke-dasharray="8 7"/><path d="M4 24.5H72" stroke="#000" stroke-dasharray="8 7"/><path d="M4 31.5H72" stroke="#fff" stroke-dasharray="8 7"/><path d="M4 38.5H72" stroke="#000" stroke-dasharray="8 7"/><path d="M4 45.5H72" stroke="#000" stroke-dasharray="8 7"/><path d="M4 52.5H72" stroke="#000" stroke-dasharray="8 7"/></g>
<g transform="translate(805,182)"><rect x="0" y="0" width="76" height="7" fill="#c55a11"/><rect x="0" y="7" width="76" height="1" fill="#fbe5d6"/><rect x="0" y="8" width="76" height="6.3" fill="#f4b183"/><rect x="0" y="21" width="76" height="1" fill="#fbe5d6"/><rect x="0" y="28" width="76" height="7" fill="#f4b183"/><rect x="0" y="42" width="76" height="1" fill="#fbe5d6"/><rect x="0" y="49" width="76" height="1" fill="#c55a11"/><path d="M4 3.5H72" stroke="#fff" stroke-dasharray="8 7"/><path d="M4 10.5H72" stroke="#fff" stroke-dasharray="8 7"/><path d="M4 17.5H72" stroke="#000" stroke-dasharray="8 7"/><path d="M4 24.5H72" stroke="#000" stroke-dasharray="8 7"/><path d="M4 31.5H72" stroke="#fff" stroke-dasharray="8 7"/><path d="M4 38.5H72" stroke="#000" stroke-dasharray="8 7"/><path d="M4 45.5H72" stroke="#000" stroke-dasharray="8 7"/><path d="M4 52.5H72" stroke="#000" stroke-dasharray="8 7"/></g>
<g transform="translate(891,182)"><rect x="0" y="0" width="76" height="7" fill="#7b7b7b"/><rect x="0" y="7" width="76" height="1" fill="#ededed"/><rect x="0" y="8" width="76" height="6.3" fill="#c9c9c9"/><rect x="0" y="21" width="76" height="1" fill="#ededed"/><rect x="0" y="28" width="76" height="7" fill="#c9c9c9"/><rect x="0" y="42" width="76" height="1" fill="#ededed"/><rect x="0" y="49" width="76" height="1" fill="#7b7b7b"/><path d="M4 3.5H72" stroke="#fff" stroke-dasharray="8 7"/><path d="M4 10.5H72" stroke="#fff" stroke-dasharray="8 7"/><path d="M4 17.5H72" stroke="#000" stroke-dasharray="8 7"/><path d="M4 24.5H72" stroke="#000" stroke-dasharray="8 7"/><path d="M4 31.5H72" stroke="#fff" stroke-dasharray="8 7"/><path d="M4 38.5H72" stroke="#000" stroke-dasharray="8 7"/><path d="M4 45.5H72" stroke="#000" stroke-dasharray="8 7"/><path d="M4 52.5H72" stroke="#000" stroke-dasharray="8 7"/></g>
<g transform="translate(977,182)"><rect x="0" y="0" width="76" height="7" fill="#bf9000"/><rect x="0" y="7" width="76" height="1" fill="#fff2cc"/><rect x="0" y="8" width="76" height="6.3" fill="#ffd966"/><rect x="0" y="21" width="76" height="1" fill="#fff2cc"/><rect x="0" y="28" width="76" height="7" fill="#ffd966"/><rect x="0" y="42" width="76" height="1" fill="#fff2cc"/><rect x="0" y="49" width="76" height="1" fill="#bf9000"/><path d="M4 3.5H72" stroke="#fff" stroke-dasharray="8 7"/><path d="M4 10.5H72" stroke="#fff" stroke-dasharray="8 7"/><path d="M4 17.5H72" stroke="#000" stroke-dasharray="8 7"/><path d="M4 24.5H72" stroke="#000" stroke-dasharray="8 7"/><path d="M4 31.5H72" stroke="#fff" stroke-dasharray="8 7"/><path d="M4 38.5H72" stroke="#000" stroke-dasharray="8 7"/><path d="M4 45.5H72" stroke="#000" stroke-dasharray="8 7"/><path d="M4 52.5H72" stroke="#000" stroke-dasharray="8 7"/></g>
<g transform="translate(1063,182)"><rect x="0" y="0" width="76" height="7" fill="#2f5597"/><rect x="0" y="7" width="76" height="1" fill="#dae3f3"/><rect x="0" y="8" width="76" height="6.3" fill="#8faadc"/><rect x="0" y="21" width="76" height="1" fill="#dae3f3"/><rect x="0" y="28" width="76" height="7" fill="#8faadc"/><rect x="0" y="42" width="76" height="1" fill="#dae3f3"/><rect x="0" y="49" width="76" height="1" fill="#2f5597"/><path d="M4 3.5H72" stroke="#fff" stroke-dasharray="8 7"/><path d="M4 10.5H72" stroke="#fff" stroke-dasharray="8 7"/><path d="M4 17.5H72" stroke="#000" stroke-dasharray="8 7"/><path d="M4 24.5H72" stroke="#000" stroke-dasharray="8 7"/><path d="M4 31.5H72" stroke="#fff" stroke-dasharray="8 7"/><path d="M4 38.5H72" stroke="#000" stroke-dasharray="8 7"/><path d="M4 45.5H72" stroke="#000" stroke-dasharray="8 7"/><path d="M4 52.5H72" stroke="#000" stroke-dasharray="8 7"/></g>
<g transform="translate(1149,182)"><rect x="0" y="0" width="76" height="7" fill="#548235"/><rect x="0" y="7" width="76" height="1" fill="#e2f0d9"/><rect x="0" y="8" width="76" height="6.3" fill="#a9d18e"/><rect x="0" y="21" width="76" height="1" fill="#e2f0d9"/><rect x="0" y="28" width="76" height="7" fill="#a9d18e"/><rect x="0" y="42" width="76" height="1" fill="#e2f0d9"/><rect x="0" y="49" width="76" height="1" fill="#548235"/><path d="M4 3.5H72" stroke="#fff" stroke-dasharray="8 7"/><path d="M4 10.5H72" stroke="#fff" stroke-dasharray="8 7"/><path d="M4 17.5H72" stroke="#000" stroke-dasharray="8 7"/><path d="M4 24.5H72" stroke="#000" stroke-dasharray="8 7"/><path d="M4 31.5H72" stroke="#fff" stroke-dasharray="8 7"/><path d="M4 38.5H72" stroke="#000" stroke-dasharray="8 7"/><path d="M4 45.5H72" stroke="#000" stroke-dasharray="8 7"/><path d="M4 52.5H72" stroke="#000" stroke-dasharray="8 7"/></g>
<g transform="translate(633,249)"><rect x="0" y="0" width="76" height="7" fill="#7f7f7f"/><rect x="0" y="7" width="76" height="7.5" fill="#d9d9d9"/><rect x="0" y="28" width="76" height="7.5" fill="#d9d9d9"/><rect x="0" y="49" width="76" height="1" fill="#000"/><rect x="0" y="56" width="76" height="1" fill="#7f7f7f"/><path d="M4 3.5H72" stroke="#fff" stroke-dasharray="8 7"/><path d="M4 10.5H72" stroke="#000" stroke-dasharray="8 7"/><path d="M4 17.5H72" stroke="#000" stroke-dasharray="8 7"/><path d="M4 24.5H72" stroke="#000" stroke-dasharray="8 7"/><path d="M4 31.5H72" stroke="#000" stroke-dasharray="8 7"/><path d="M4 38.5H72" stroke="#000" stroke-dasharray="8 7"/><path d="M4 45.5H72" stroke="#000" stroke-dasharray="8 7"/><path d="M4 52.5H72" stroke="#000" stroke-dasharray="8 7"/></g>
<g transform="translate(719,249)"><rect x="0" y="0" width="76" height="7" fill="#5b9bd5"/><rect x="0" y="0" width="76" height="1" fill="#2e75b6"/><rect x="0" y="7" width="76" height="7.5" fill="#deebf7"/><rect x="0" y="28" width="76" height="7.5" fill="#deebf7"/><rect x="0" y="49" width="76" height="1" fill="#2e75b6"/><rect x="0" y="56" width="76" height="1" fill="#2e75b6"/><path d="M4 3.5H72" stroke="#fff" stroke-dasharray="8 7"/><path d="M4 10.5H72" stroke="#000" stroke-dasharray="8 7"/><path d="M4 17.5H72" stroke="#000" stroke-dasharray="8 7"/><path d="M4 24.5H72" stroke="#000" stroke-dasharray="8 7"/><path d="M4 31.5H72" stroke="#000" stroke-dasharray="8 7"/><path d="M4 38.5H72" stroke="#000" stroke-dasharray="8 7"/><path d="M4 45.5H72" stroke="#000" stroke-dasharray="8 7"/><path d="M4 52.5H72" stroke="#000" stroke-dasharray="8 7"/></g>
<g transform="translate(805,249)"><rect x="0" y="0" width="76" height="7" fill="#ed7d31"/><rect x="0" y="0" width="76" height="1" fill="#c55a11"/><rect x="0" y="7" width="76" height="7.5" fill="#fbe5d6"/><rect x="0" y="28" width="76" height="7.5" fill="#fbe5d6"/><rect x="0" y="49" width="76" height="1" fill="#c55a11"/><rect x="0" y="56" width="76" height="1" fill="#c55a11"/><path d="M4 3.5H72" stroke="#fff" stroke-dasharray="8 7"/><path d="M4 10.5H72" stroke="#000" stroke-dasharray="8 7"/><path d="M4 17.5H72" stroke="#000" stroke-dasharray="8 7"/><path d="M4 24.5H72" stroke="#000" stroke-dasharray="8 7"/><path d="M4 31.5H72" stroke="#000" stroke-dasharray="8 7"/><path d="M4 38.5H72" stroke="#000" stroke-dasharray="8 7"/><path d="M4 45.5H72" stroke="#000" stroke-dasharray="8 7"/><path d="M4 52.5H72" stroke="#000" stroke-dasharray="8 7"/></g>
<g transform="translate(891,249)"><rect x="0" y="0" width="76" height="7" fill="#a5a5a5"/><rect x="0" y="0" width="76" height="1" fill="#7b7b7b"/><rect x="0" y="7" width="76" height="7.5" fill="#ededed"/><rect x="0" y="28" width="76" height="7.5" fill="#ededed"/><rect x="0" y="49" width="76" height="1" fill="#7b7b7b"/><rect x="0" y="56" width="76" height="1" fill="#7b7b7b"/><path d="M4 3.5H72" stroke="#fff" stroke-dasharray="8 7"/><path d="M4 10.5H72" stroke="#000" stroke-dasharray="8 7"/><path d="M4 17.5H72" stroke="#000" stroke-dasharray="8 7"/><path d="M4 24.5H72" stroke="#000" stroke-dasharray="8 7"/><path d="M4 31.5H72" stroke="#000" stroke-dasharray="8 7"/><path d="M4 38.5H72" stroke="#000" stroke-dasharray="8 7"/><path d="M4 45.5H72" stroke="#000" stroke-dasharray="8 7"/><path d="M4 52.5H72" stroke="#000" stroke-dasharray="8 7"/></g>
<g transform="translate(977,249)"><rect x="0" y="0" width="76" height="7" fill="#ffc000"/><rect x="0" y="0" width="76" height="1" fill="#bf9000"/><rect x="0" y="7" width="76" height="7.5" fill="#fff2cc"/><rect x="0" y="28" width="76" height="7.5" fill="#fff2cc"/><rect x="0" y="49" width="76" height="1" fill="#bf9000"/><rect x="0" y="56" width="76" height="1" fill="#bf9000"/><path d="M4 3.5H72" stroke="#fff" stroke-dasharray="8 7"/><path d="M4 10.5H72" stroke="#000" stroke-dasharray="8 7"/><path d="M4 17.5H72" stroke="#000" stroke-dasharray="8 7"/><path d="M4 24.5H72" stroke="#000" stroke-dasharray="8 7"/><path d="M4 31.5H72" stroke="#000" stroke-dasharray="8 7"/><path d="M4 38.5H72" stroke="#000" stroke-dasharray="8 7"/><path d="M4 45.5H72" stroke="#000" stroke-dasharray="8 7"/><path d="M4 52.5H72" stroke="#000" stroke-dasharray="8 7"/></g>
<g transform="translate(1063,249)"><rect x="0" y="0" width="76" height="7" fill="#4472c4"/><rect x="0" y="0" width="76" height="1" fill="#2f5597"/><rect x="0" y="7" width="76" height="7.5" fill="#dae3f3"/><rect x="0" y="28" width="76" height="7.5" fill="#dae3f3"/><rect x="0" y="49" width="76" height="1" fill="#2f5597"/><rect x="0" y="56" width="76" height="1" fill="#2f5597"/><path d="M4 3.5H72" stroke="#fff" stroke-dasharray="8 7"/><path d="M4 10.5H72" stroke="#000" stroke-dasharray="8 7"/><path d="M4 17.5H72" stroke="#000" stroke-dasharray="8 7"/><path d="M4 24.5H72" stroke="#000" stroke-dasharray="8 7"/><path d="M4 31.5H72" stroke="#000" stroke-dasharray="8 7"/><path d="M4 38.5H72" stroke="#000" stroke-dasharray="8 7"/><path d="M4 45.5H72" stroke="#000" stroke-dasharray="8 7"/><path d="M4 52.5H72" stroke="#000" stroke-dasharray="8 7"/></g>
<g transform="translate(1149,249)"><rect x="0" y="0" width="76" height="7" fill="#70ad47"/><rect x="0" y="0" width="76" height="1" fill="#548235"/><rect x="0" y="7" width="76" height="7.5" fill="#e2f0d9"/><rect x="0" y="28" width="76" height="7.5" fill="#e2f0d9"/><rect x="0" y="49" width="76" height="1" fill="#548235"/><rect x="0" y="56" width="76" height="1" fill="#548235"/><path d="M4 3.5H72" stroke="#fff" stroke-dasharray="8 7"/><path d="M4 10.5H72" stroke="#000" stroke-dasharray="8 7"/><path d="M4 17.5H72" stroke="#000" stroke-dasharray="8 7"/><path d="M4 24.5H72" stroke="#000" stroke-dasharray="8 7"/><path d="M4 31.5H72" stroke="#000" stroke-dasharray="8 7"/><path d="M4 38.5H72" stroke="#000" stroke-dasharray="8 7"/><path d="M4 45.5H72" stroke="#000" stroke-dasharray="8 7"/><path d="M4 52.5H72" stroke="#000" stroke-dasharray="8 7"/></g>
<g transform="translate(633,316)"><rect x="0" y="7" width="76" height="43" fill="#f2f2f2"/><rect x="0" y="7" width="1" height="43" fill="#d9d9d9"/><rect x="15" y="7" width="1" height="43" fill="#d9d9d9"/><rect x="30" y="7" width="1" height="43" fill="#d9d9d9"/><rect x="45" y="7" width="1" height="43" fill="#d9d9d9"/><rect x="60" y="7" width="1" height="43" fill="#d9d9d9"/><rect x="75" y="7" width="1" height="43" fill="#d9d9d9"/><rect x="0" y="0" width="76" height="7.6" fill="#000"/><rect x="0" y="49" width="76" height="7.6" fill="#000"/><path d="M4 3.5H72" stroke="#fff" stroke-dasharray="8 7"/><path d="M4 10.5H72" stroke="#000" stroke-dasharray="8 7"/><path d="M4 17.5H72" stroke="#000" stroke-dasharray="8 7"/><path d="M4 24.5H72" stroke="#000" stroke-dasharray="8 7"/><path d="M4 31.5H72" stroke="#000" stroke-dasharray="8 7"/><path d="M4 38.5H72" stroke="#000" stroke-dasharray="8 7"/><path d="M4 45.5H72" stroke="#000" stroke-dasharray="8 7"/><path d="M4 52.5H72" stroke="#fff" stroke-dasharray="8 7"/></g>
<g transform="translate(719,316)"><rect x="0" y="7" width="76" height="43" fill="#deebf7"/><rect x="0" y="7" width="1" height="43" fill="#bdd7ee"/><rect x="15" y="7" width="1" height="43" fill="#bdd7ee"/><rect x="30" y="7" width="1" height="43" fill="#bdd7ee"/><rect x="45" y="7" width="1" height="43" fill="#bdd7ee"/><rect x="60" y="7" width="1" height="43" fill="#bdd7ee"/><rect x="75" y="7" width="1" height="43" fill="#bdd7ee"/><rect x="0" y="0" width="76" height="7.6" fill="#000"/><rect x="0" y="49" width="76" height="7.6" fill="#000"/><path d="M4 3.5H72" stroke="#fff" stroke-dasharray="8 7"/><path d="M4 10.5H72" stroke="#000" stroke-dasharray="8 7"/><path d="M4 17.5H72" stroke="#000" stroke-dasharray="8 7"/><path d="M4 24.5H72" stroke="#000" stroke-dasharray="8 7"/><path d="M4 31.5H72" stroke="#000" stroke-dasharray="8 7"/><path d="M4 38.5H72" stroke="#000" stroke-dasharray="8 7"/><path d="M4 45.5H72" stroke="#000" stroke-dasharray="8 7"/><path d="M4 52.5H72" stroke="#fff" stroke-dasharray="8 7"/></g>
<g transform="translate(805,316)"><rect x="0" y="7" width="76" height="43" fill="#fbe5d6"/><rect x="0" y="7" width="1" height="43" fill="#f8cbad"/><rect x="15" y="7" width="1" height="43" fill="#f8cbad"/><rect x="30" y="7" width="1" height="43" fill="#f8cbad"/><rect x="45" y="7" width="1" height="43" fill="#f8cbad"/><rect x="60" y="7" width="1" height="43" fill="#f8cbad"/><rect x="75" y="7" width="1" height="43" fill="#f8cbad"/><rect x="0" y="0" width="76" height="7.6" fill="#000"/><rect x="0" y="49" width="76" height="7.6" fill="#000"/><path d="M4 3.5H72" stroke="#fff" stroke-dasharray="8 7"/><path d="M4 10.5H72" stroke="#000" stroke-dasharray="8 7"/><path d="M4 17.5H72" stroke="#000" stroke-dasharray="8 7"/><path d="M4 24.5H72" stroke="#000" stroke-dasharray="8 7"/><path d="M4 31.5H72" stroke="#000" stroke-dasharray="8 7"/><path d="M4 38.5H72" stroke="#000" stroke-dasharray="8 7"/><path d="M4 45.5H72" stroke="#000" stroke-dasharray="8 7"/><path d="M4 52.5H72" stroke="#fff" stroke-dasharray="8 7"/></g>
<g transform="translate(891,316)"><rect x="0" y="7" width="76" height="43" fill="#ededed"/><rect x="0" y="7" width="1" height="43" fill="#dbdbdb"/><rect x="15" y="7" width="1" height="43" fill="#dbdbdb"/><rect x="30" y="7" width="1" height="43" fill="#dbdbdb"/><rect x="45" y="7" width="1" height="43" fill="#dbdbdb"/><rect x="60" y="7" width="1" height="43" fill="#dbdbdb"/><rect x="75" y="7" width="1" height="43" fill="#dbdbdb"/><rect x="0" y="0" width="76" height="7.6" fill="#000"/><rect x="0" y="49" width="76" height="7.6" fill="#000"/><path d="M4 3.5H72" stroke="#fff" stroke-dasharray="8 7"/><path d="M4 10.5H72" stroke="#000" stroke-dasharray="8 7"/><path d="M4 17.5H72" stroke="#000" stroke-dasharray="8 7"/><path d="M4 24.5H72" stroke="#000" stroke-dasharray="8 7"/><path d="M4 31.5H72" stroke="#000" stroke-dasharray="8 7"/><path d="M4 38.5H72" stroke="#000" stroke-dasharray="8 7"/><path d="M4 45.5H72" stroke="#000" stroke-dasharray="8 7"/><path d="M4 52.5H72" stroke="#fff" stroke-dasharray="8 7"/></g>
<g transform="translate(977,316)"><rect x="0" y="7" width="76" height="43" fill="#fff2cc"/><rect x="0" y="7" width="1" height="43" fill="#ffe699"/><rect x="15" y="7" width="1" height="43" fill="#ffe699"/><rect x="30" y="7" width="1" height="43" fill="#ffe699"/><rect x="45" y="7" width="1" height="43" fill="#ffe699"/><rect x="60" y="7" width="1" height="43" fill="#ffe699"/><rect x="75" y="7" width="1" height="43" fill="#ffe699"/><rect x="0" y="0" width="76" height="7.6" fill="#000"/><rect x="0" y="49" width="76" height="7.6" fill="#000"/><path d="M4 3.5H72" stroke="#fff" stroke-dasharray="8 7"/><path d="M4 10.5H72" stroke="#000" stroke-dasharray="8 7"/><path d="M4 17.5H72" stroke="#000" stroke-dasharray="8 7"/><path d="M4 24.5H72" stroke="#000" stroke-dasharray="8 7"/><path d="M4 31.5H72" stroke="#000" stroke-dasharray="8 7"/><path d="M4 38.5H72" stroke="#000" stroke-dasharray="8 7"/><path d="M4 45.5H72" stroke="#000" stroke-dasharray="8 7"/><path d="M4 52.5H72" stroke="#fff" stroke-dasharray="8 7"/></g>
<g transform="translate(1063,316)"><rect x="0" y="7" width="76" height="43" fill="#dae3f3"/><rect x="0" y="7" width="1" height="43" fill="#b4c7e7"/><rect x="15" y="7" width="1" height="43" fill="#b4c7e7"/><rect x="30" y="7" width="1" height="43" fill="#b4c7e7"/><rect x="45" y="7" width="1" height="43" fill="#b4c7e7"/><rect x="60" y="7" width="1" height="43" fill="#b4c7e7"/><rect x="75" y="7" width="1" height="43" fill="#b4c7e7"/><rect x="0" y="0" width="76" height="7.6" fill="#000"/><rect x="0" y="49" width="76" height="7.6" fill="#000"/><path d="M4 3.5H72" stroke="#fff" stroke-dasharray="8 7"/><path d="M4 10.5H72" stroke="#000" stroke-dasharray="8 7"/><path d="M4 17.5H72" stroke="#000" stroke-dasharray="8 7"/><path d="M4 24.5H72" stroke="#000" stroke-dasharray="8 7"/><path d="M4 31.5H72" stroke="#000" stroke-dasharray="8 7"/><path d="M4 38.5H72" stroke="#000" stroke-dasharray="8 7"/><path d="M4 45.5H72" stroke="#000" stroke-dasharray="8 7"/><path d="M4 52.5H72" stroke="#fff" stroke-dasharray="8 7"/></g>
<g transform="translate(1149,316)"><rect x="0" y="7" width="76" height="43" fill="#e2f0d9"/><rect x="0" y="7" width="1" height="43" fill="#c5e0b4"/><rect x="15" y="7" width="1" height="43" fill="#c5e0b4"/><rect x="30" y="7" width="1" height="43" fill="#c5e0b4"/><rect x="45" y="7" width="1" height="43" fill="#c5e0b4"/><rect x="60" y="7" width="1" height="43" fill="#c5e0b4"/><rect x="75" y="7" width="1" height="43" fill="#c5e0b4"/><rect x="0" y="0" width="76" height="7.6" fill="#000"/><rect x="0" y="49" width="76" height="7.6" fill="#000"/><path d="M4 3.5H72" stroke="#fff" stroke-dasharray="8 7"/><path d="M4 10.5H72" stroke="#000" stroke-dasharray="8 7"/><path d="M4 17.5H72" stroke="#000" stroke-dasharray="8 7"/><path d="M4 24.5H72" stroke="#000" stroke-dasharray="8 7"/><path d="M4 31.5H72" stroke="#000" stroke-dasharray="8 7"/><path d="M4 38.5H72" stroke="#000" stroke-dasharray="8 7"/><path d="M4 45.5H72" stroke="#000" stroke-dasharray="8 7"/><path d="M4 52.5H72" stroke="#fff" stroke-dasharray="8 7"/></g>
<g transform="translate(633,383)"><rect x="0" y="0" width="15" height="6.8" fill="#bfbfbf"/><rect x="0" y="8" width="15" height="48.7" fill="#bfbfbf"/><rect x="16.1" y="0" width="13.9" height="6.8" fill="#d9d9d9"/><rect x="16.1" y="8" width="13.9" height="48.7" fill="#d9d9d9"/><rect x="31.1" y="0" width="13.9" height="6.8" fill="#d9d9d9"/><rect x="31.1" y="8" width="13.9" height="48.7" fill="#d9d9d9"/><rect x="46.1" y="0" width="13.9" height="6.8" fill="#d9d9d9"/><rect x="46.1" y="8" width="13.9" height="48.7" fill="#d9d9d9"/><rect x="61.1" y="0" width="14.9" height="6.8" fill="#d9d9d9"/><rect x="61.1" y="8" width="14.9" height="48.7" fill="#d9d9d9"/><path d="M4 3.5H72" stroke="#7f7f7f" stroke-dasharray="8 7"/><path d="M4 10.5H72" stroke="#000" stroke-dasharray="8 7"/><path d="M4 17.5H72" stroke="#7f7f7f" stroke-dasharray="8 7"/><path d="M4 24.5H72" stroke="#7f7f7f" stroke-dasharray="8 7"/><path d="M4 31.5H72" stroke="#000" stroke-dasharray="8 7"/><path d="M4 38.5H72" stroke="#7f7f7f" stroke-dasharray="8 7"/><path d="M4 45.5H72" stroke="#7f7f7f" stroke-dasharray="8 7"/><path d="M4 52.5H72" stroke="#7f7f7f" stroke-dasharray="8 7"/></g>
<g transform="translate(719,383)"><rect x="0" y="0" width="15" height="6.8" fill="#bdd7ee"/><rect x="0" y="8" width="15" height="48.7" fill="#bdd7ee"/><rect x="16.1" y="0" width="13.9" height="6.8" fill="#deebf7"/><rect x="16.1" y="8" width="13.9" height="48.7" fill="#deebf7"/><rect x="31.1" y="0" width="13.9" height="6.8" fill="#deebf7"/><rect x="31.1" y="8" width="13.9" height="48.7" fill="#deebf7"/><rect x="46.1" y="0" width="13.9" height="6.8" fill="#deebf7"/><rect x="46.1" y="8" width="13.9" height="48.7" fill="#deebf7"/><rect x="61.1" y="0" width="14.9" height="6.8" fill="#deebf7"/><rect x="61.1" y="8" width="14.9" height="48.7" fill="#deebf7"/><path d="M4 3.5H72" stroke="#2e75b6" stroke-dasharray="8 7"/><path d="M4 10.5H72" stroke="#000" stroke-dasharray="8 7"/><path d="M4 17.5H72" stroke="#2e75b6" stroke-dasharray="8 7"/><path d="M4 24.5H72" stroke="#2e75b6" stroke-dasharray="8 7"/><path d="M4 31.5H72" stroke="#000" stroke-dasharray="8 7"/><path d="M4 38.5H72" stroke="#2e75b6" stroke-dasharray="8 7"/><path d="M4 45.5H72" stroke="#2e75b6" stroke-dasharray="8 7"/><path d="M4 52.5H72" stroke="#2e75b6" stroke-dasharray="8 7"/></g>
<g transform="translate(805,383)"><rect x="0" y="0" width="15" height="6.8" fill="#f8cbad"/><rect x="0" y="8" width="15" height="48.7" fill="#f8cbad"/><rect x="16.1" y="0" width="13.9" height="6.8" fill="#fbe5d6"/><rect x="16.1" y="8" width="13.9" height="48.7" fill="#fbe5d6"/><rect x="31.1" y="0" width="13.9" height="6.8" fill="#fbe5d6"/><rect x="31.1" y="8" width="13.9" height="48.7" fill="#fbe5d6"/><rect x="46.1" y="0" width="13.9" height="6.8" fill="#fbe5d6"/><rect x="46.1" y="8" width="13.9" height="48.7" fill="#fbe5d6"/><rect x="61.1" y="0" width="14.9" height="6.8" fill="#fbe5d6"/><rect x="61.1" y="8" width="14.9" height="48.7" fill="#fbe5d6"/><path d="M4 3.5H72" stroke="#c55a11" stroke-dasharray="8 7"/><path d="M4 10.5H72" stroke="#000" stroke-dasharray="8 7"/><path d="M4 17.5H72" stroke="#c55a11" stroke-dasharray="8 7"/><path d="M4 24.5H72" stroke="#c55a11" stroke-dasharray="8 7"/><path d="M4 31.5H72" stroke="#000" stroke-dasharray="8 7"/><path d="M4 38.5H72" stroke="#c55a11" stroke-dasharray="8 7"/><path d="M4 45.5H72" stroke="#c55a11" stroke-dasharray="8 7"/><path d="M4 52.5H72" stroke="#c55a11" stroke-dasharray="8 7"/></g>
<g transform="translate(891,383)"><rect x="0" y="0" width="15" height="6.8" fill="#dbdbdb"/><rect x="0" y="8" width="15" height="48.7" fill="#dbdbdb"/><rect x="16.1" y="0" width="13.9" height="6.8" fill="#ededed"/><rect x="16.1" y="8" width="13.9" height="48.7" fill="#ededed"/><rect x="31.1" y="0" width="13.9" height="6.8" fill="#ededed"/><rect x="31.1" y="8" width="13.9" height="48.7" fill="#ededed"/><rect x="46.1" y="0" width="13.9" height="6.8" fill="#ededed"/><rect x="46.1" y="8" width="13.9" height="48.7" fill="#ededed"/><rect x="61.1" y="0" width="14.9" height="6.8" fill="#ededed"/><rect x="61.1" y="8" width="14.9" height="48.7" fill="#ededed"/><path d="M4 3.5H72" stroke="#7b7b7b" stroke-dasharray="8 7"/><path d="M4 10.5H72" stroke="#000" stroke-dasharray="8 7"/><path d="M4 17.5H72" stroke="#7b7b7b" stroke-dasharray="8 7"/><path d="M4 24.5H72" stroke="#7b7b7b" stroke-dasharray="8 7"/><path d="M4 31.5H72" stroke="#000" stroke-dasharray="8 7"/><path d="M4 38.5H72" stroke="#7b7b7b" stroke-dasharray="8 7"/><path d="M4 45.5H72" stroke="#7b7b7b" stroke-dasharray="8 7"/><path d="M4 52.5H72" stroke="#7b7b7b" stroke-dasharray="8 7"/></g>
<g transform="translate(977,383)"><rect x="0" y="0" width="15" height="6.8" fill="#ffe699"/><rect x="0" y="8" width="15" height="48.7" fill="#ffe699"/><rect x="16.1" y="0" width="13.9" height="6.8" fill="#fff2cc"/><rect x="16.1" y="8" width="13.9" height="48.7" fill="#fff2cc"/><rect x="31.1" y="0" width="13.9" height="6.8" fill="#fff2cc"/><rect x="31.1" y="8" width="13.9" height="48.7" fill="#fff2cc"/><rect x="46.1" y="0" width="13.9" height="6.8" fill="#fff2cc"/><rect x="46.1" y="8" width="13.9" height="48.7" fill="#fff2cc"/><rect x="61.1" y="0" width="14.9" height="6.8" fill="#fff2cc"/><rect x="61.1" y="8" width="14.9" height="48.7" fill="#fff2cc"/><path d="M4 3.5H72" stroke="#bf9000" stroke-dasharray="8 7"/><path d="M4 10.5H72" stroke="#000" stroke-dasharray="8 7"/><path d="M4 17.5H72" stroke="#bf9000" stroke-dasharray="8 7"/><path d="M4 24.5H72" stroke="#bf9000" stroke-dasharray="8 7"/><path d="M4 31.5H72" stroke="#000" stroke-dasharray="8 7"/><path d="M4 38.5H72" stroke="#bf9000" stroke-dasharray="8 7"/><path d="M4 45.5H72" stroke="#bf9000" stroke-dasharray="8 7"/><path d="M4 52.5H72" stroke="#bf9000" stroke-dasharray="8 7"/></g>
<g transform="translate(1063,383)"><rect x="0" y="0" width="15" height="6.8" fill="#b4c7e7"/><rect x="0" y="8" width="15" height="48.7" fill="#b4c7e7"/><rect x="16.1" y="0" width="13.9" height="6.8" fill="#dae3f3"/><rect x="16.1" y="8" width="13.9" height="48.7" fill="#dae3f3"/><rect x="31.1" y="0" width="13.9" height="6.8" fill="#dae3f3"/><rect x="31.1" y="8" width="13.9" height="48.7" fill="#dae3f3"/><rect x="46.1" y="0" width="13.9" height="6.8" fill="#dae3f3"/><rect x="46.1" y="8" width="13.9" height="48.7" fill="#dae3f3"/><rect x="61.1" y="0" width="14.9" height="6.8" fill="#dae3f3"/><rect x="61.1" y="8" width="14.9" height="48.7" fill="#dae3f3"/><path d="M4 3.5H72" stroke="#2f5597" stroke-dasharray="8 7"/><path d="M4 10.5H72" stroke="#000" stroke-dasharray="8 7"/><path d="M4 17.5H72" stroke="#2f5597" stroke-dasharray="8 7"/><path d="M4 24.5H72" stroke="#2f5597" stroke-dasharray="8 7"/><path d="M4 31.5H72" stroke="#000" stroke-dasharray="8 7"/><path d="M4 38.5H72" stroke="#2f5597" stroke-dasharray="8 7"/><path d="M4 45.5H72" stroke="#2f5597" stroke-dasharray="8 7"/><path d="M4 52.5H72" stroke="#2f5597" stroke-dasharray="8 7"/></g>
<g transform="translate(1149,383)"><rect x="0" y="0" width="15" height="6.8" fill="#c5e0b4"/><rect x="0" y="8" width="15" height="48.7" fill="#c5e0b4"/><rect x="16.1" y="0" width="13.9" height="6.8" fill="#e2f0d9"/><rect x="16.1" y="8" width="13.9" height="48.7" fill="#e2f0d9"/><rect x="31.1" y="0" width="13.9" height="6.8" fill="#e2f0d9"/><rect x="31.1" y="8" width="13.9" height="48.7" fill="#e2f0d9"/><rect x="46.1" y="0" width="13.9" height="6.8" fill="#e2f0d9"/><rect x="46.1" y="8" width="13.9" height="48.7" fill="#e2f0d9"/><rect x="61.1" y="0" width="14.9" height="6.8" fill="#e2f0d9"/><rect x="61.1" y="8" width="14.9" height="48.7" fill="#e2f0d9"/><path d="M4 3.5H72" stroke="#548235" stroke-dasharray="8 7"/><path d="M4 10.5H72" stroke="#000" stroke-dasharray="8 7"/><path d="M4 17.5H72" stroke="#548235" stroke-dasharray="8 7"/><path d="M4 24.5H72" stroke="#548235" stroke-dasharray="8 7"/><path d="M4 31.5H72" stroke="#000" stroke-dasharray="8 7"/><path d="M4 38.5H72" stroke="#548235" stroke-dasharray="8 7"/><path d="M4 45.5H72" stroke="#548235" stroke-dasharray="8 7"/><path d="M4 52.5H72" stroke="#548235" stroke-dasharray="8 7"/></g>
<g transform="translate(633,500)"><rect x="0" y="0" width="76" height="7" fill="#7f7f7f"/><rect x="0" y="7" width="76" height="43" fill="#bfbfbf"/><rect x="0" y="7" width="76" height="7" fill="#d9d9d9"/><rect x="0" y="28" width="76" height="7" fill="#d9d9d9"/><rect x="0" y="14" width="76" height="1" fill="#a6a6a6"/><rect x="0" y="21" width="76" height="1" fill="#a6a6a6"/><rect x="0" y="28" width="76" height="1" fill="#a6a6a6"/><rect x="0" y="35" width="76" height="1" fill="#a6a6a6"/><rect x="0" y="42" width="76" height="1" fill="#a6a6a6"/><rect x="0" y="50" width="76" height="7" fill="#7f7f7f"/><path d="M4 3.5H72" stroke="#fff" stroke-dasharray="8 7"/><path d="M4 10.5H72" stroke="#000" stroke-dasharray="8 7"/><path d="M4 17.5H72" stroke="#000" stroke-dasharray="8 7"/><path d="M4 24.5H72" stroke="#000" stroke-dasharray="8 7"/><path d="M4 31.5H72" stroke="#000" stroke-dasharray="8 7"/><path d="M4 38.5H72" stroke="#000" stroke-dasharray="8 7"/><path d="M4 45.5H72" stroke="#000" stroke-dasharray="8 7"/><path d="M4 52.5H72" stroke="#fff" stroke-dasharray="8 7"/></g>
<g transform="translate(719,500)"><rect x="0" y="0" width="76" height="7" fill="#1f4e79"/><rect x="0" y="7" width="76" height="43" fill="#bdd7ee"/><rect x="0" y="7" width="76" height="7" fill="#deebf7"/><rect x="0" y="28" width="76" height="7" fill="#deebf7"/><rect x="0" y="14" width="76" height="1" fill="#9dc3e6"/><rect x="0" y="21" width="76" height="1" fill="#9dc3e6"/><rect x="0" y="28" width="76" height="1" fill="#9dc3e6"/><rect x="0" y="35" width="76" height="1" fill="#9dc3e6"/><rect x="0" y="42" width="76" height="1" fill="#9dc3e6"/><rect x="0" y="50" width="76" height="7" fill="#1f4e79"/><path d="M4 3.5H72" stroke="#fff" stroke-dasharray="8 7"/><path d="M4 10.5H72" stroke="#000" stroke-dasharray="8 7"/><path d="M4 17.5H72" stroke="#000" stroke-dasharray="8 7"/><path d="M4 24.5H72" stroke="#000" stroke-dasharray="8 7"/><path d="M4 31.5H72" stroke="#000" stroke-dasharray="8 7"/><path d="M4 38.5H72" stroke="#000" stroke-dasharray="8 7"/><path d="M4 45.5H72" stroke="#000" stroke-dasharray="8 7"/><path d="M4 52.5H72" stroke="#fff" stroke-dasharray="8 7"/></g>
<g transform="translate(805,500)"><rect x="0" y="0" width="76" height="7" fill="#843c0c"/><rect x="0" y="7" width="76" height="43" fill="#f8cbad"/><rect x="0" y="7" width="76" height="7" fill="#fbe5d6"/><rect x="0" y="28" width="76" height="7" fill="#fbe5d6"/><rect x="0" y="14" width="76" height="1" fill="#f4b183"/><rect x="0" y="21" width="76" height="1" fill="#f4b183"/><rect x="0" y="28" width="76" height="1" fill="#f4b183"/><rect x="0" y="35" width="76" height="1" fill="#f4b183"/><rect x="0" y="42" width="76" height="1" fill="#f4b183"/><rect x="0" y="50" width="76" height="7" fill="#843c0c"/><path d="M4 3.5H72" stroke="#fff" stroke-dasharray="8 7"/><path d="M4 10.5H72" stroke="#000" stroke-dasharray="8 7"/><path d="M4 17.5H72" stroke="#000" stroke-dasharray="8 7"/><path d="M4 24.5H72" stroke="#000" stroke-dasharray="8 7"/><path d="M4 31.5H72" stroke="#000" stroke-dasharray="8 7"/><path d="M4 38.5H72" stroke="#000" stroke-dasharray="8 7"/><path d="M4 45.5H72" stroke="#000" stroke-dasharray="8 7"/><path d="M4 52.5H72" stroke="#fff" stroke-dasharray="8 7"/></g>
<g transform="translate(891,500)"><rect x="0" y="0" width="76" height="7" fill="#525252"/><rect x="0" y="7" width="76" height="43" fill="#dbdbdb"/><rect x="0" y="7" width="76" height="7" fill="#ededed"/><rect x="0" y="28" width="76" height="7" fill="#ededed"/><rect x="0" y="14" width="76" height="1" fill="#c9c9c9"/><rect x="0" y="21" width="76" height="1" fill="#c9c9c9"/><rect x="0" y="28" width="76" height="1" fill="#c9c9c9"/><rect x="0" y="35" width="76" height="1" fill="#c9c9c9"/><rect x="0" y="42" width="76" height="1" fill="#c9c9c9"/><rect x="0" y="50" width="76" height="7" fill="#525252"/><path d="M4 3.5H72" stroke="#fff" stroke-dasharray="8 7"/><path d="M4 10.5H72" stroke="#000" stroke-dasharray="8 7"/><path d="M4 17.5H72" stroke="#000" stroke-dasharray="8 7"/><path d="M4 24.5H72" stroke="#000" stroke-dasharray="8 7"/><path d="M4 31.5H72" stroke="#000" stroke-dasharray="8 7"/><path d="M4 38.5H72" stroke="#000" stroke-dasharray="8 7"/><path d="M4 45.5H72" stroke="#000" stroke-dasharray="8 7"/><path d="M4 52.5H72" stroke="#fff" stroke-dasharray="8 7"/></g>
<g transform="translate(977,500)"><rect x="0" y="0" width="76" height="7" fill="#7f6000"/><rect x="0" y="7" width="76" height="43" fill="#ffe699"/><rect x="0" y="7" width="76" height="7" fill="#fff2cc"/><rect x="0" y="28" width="76" height="7" fill="#fff2cc"/><rect x="0" y="14" width="76" height="1" fill="#ffd966"/><rect x="0" y="21" width="76" height="1" fill="#ffd966"/><rect x="0" y="28" width="76" height="1" fill="#ffd966"/><rect x="0" y="35" width="76" height="1" fill="#ffd966"/><rect x="0" y="42" width="76" height="1" fill="#ffd966"/><rect x="0" y="50" width="76" height="7" fill="#7f6000"/><path d="M4 3.5H72" stroke="#fff" stroke-dasharray="8 7"/><path d="M4 10.5H72" stroke="#000" stroke-dasharray="8 7"/><path d="M4 17.5H72" stroke="#000" stroke-dasharray="8 7"/><path d="M4 24.5H72" stroke="#000" stroke-dasharray="8 7"/><path d="M4 31.5H72" stroke="#000" stroke-dasharray="8 7"/><path d="M4 38.5H72" stroke="#000" stroke-dasharray="8 7"/><path d="M4 45.5H72" stroke="#000" stroke-dasharray="8 7"/><path d="M4 52.5H72" stroke="#fff" stroke-dasharray="8 7"/></g>
<g transform="translate(1063,500)"><rect x="0" y="0" width="76" height="7" fill="#1f3864"/><rect x="0" y="7" width="76" height="43" fill="#b4c7e7"/><rect x="0" y="7" width="76" height="7" fill="#dae3f3"/><rect x="0" y="28" width="76" height="7" fill="#dae3f3"/><rect x="0" y="14" width="76" height="1" fill="#8faadc"/><rect x="0" y="21" width="76" height="1" fill="#8faadc"/><rect x="0" y="28" width="76" height="1" fill="#8faadc"/><rect x="0" y="35" width="76" height="1" fill="#8faadc"/><rect x="0" y="42" width="76" height="1" fill="#8faadc"/><rect x="0" y="50" width="76" height="7" fill="#1f3864"/><path d="M4 3.5H72" stroke="#fff" stroke-dasharray="8 7"/><path d="M4 10.5H72" stroke="#000" stroke-dasharray="8 7"/><path d="M4 17.5H72" stroke="#000" stroke-dasharray="8 7"/><path d="M4 24.5H72" stroke="#000" stroke-dasharray="8 7"/><path d="M4 31.5H72" stroke="#000" stroke-dasharray="8 7"/><path d="M4 38.5H72" stroke="#000" stroke-dasharray="8 7"/><path d="M4 45.5H72" stroke="#000" stroke-dasharray="8 7"/><path d="M4 52.5H72" stroke="#fff" stroke-dasharray="8 7"/></g>
<g transform="translate(1149,500)"><rect x="0" y="0" width="76" height="7" fill="#385723"/><rect x="0" y="7" width="76" height="43" fill="#c5e0b4"/><rect x="0" y="7" width="76" height="7" fill="#e2f0d9"/><rect x="0" y="28" width="76" height="7" fill="#e2f0d9"/><rect x="0" y="14" width="76" height="1" fill="#a9d18e"/><rect x="0" y="21" width="76" height="1" fill="#a9d18e"/><rect x="0" y="28" width="76" height="1" fill="#a9d18e"/><rect x="0" y="35" width="76" height="1" fill="#a9d18e"/><rect x="0" y="42" width="76" height="1" fill="#a9d18e"/><rect x="0" y="50" width="76" height="7" fill="#385723"/><path d="M4 3.5H72" stroke="#fff" stroke-dasharray="8 7"/><path d="M4 10.5H72" stroke="#000" stroke-dasharray="8 7"/><path d="M4 17.5H72" stroke="#000" stroke-dasharray="8 7"/><path d="M4 24.5H72" stroke="#000" stroke-dasharray="8 7"/><path d="M4 31.5H72" stroke="#000" stroke-dasharray="8 7"/><path d="M4 38.5H72" stroke="#000" stroke-dasharray="8 7"/><path d="M4 45.5H72" stroke="#000" stroke-dasharray="8 7"/><path d="M4 52.5H72" stroke="#fff" stroke-dasharray="8 7"/></g>
<g transform="translate(633,567)"><rect x="0" y="0" width="76" height="57" fill="#7f7f7f"/><rect x="1" y="7" width="74" height="43" fill="#d9d9d9"/><rect x="1" y="7" width="74" height="7" fill="#bfbfbf"/><rect x="1" y="28" width="74" height="7" fill="#bfbfbf"/><rect x="0.6" y="0.6" width="74.8" height="6.9" fill="#404040"/><rect x="0.6" y="49.3" width="74.8" height="7.1" fill="#404040"/><path d="M4 3.5H72" stroke="#fff" stroke-dasharray="8 7"/><path d="M4 10.5H72" stroke="#000" stroke-dasharray="8 7"/><path d="M4 17.5H72" stroke="#000" stroke-dasharray="8 7"/><path d="M4 24.5H72" stroke="#000" stroke-dasharray="8 7"/><path d="M4 31.5H72" stroke="#000" stroke-dasharray="8 7"/><path d="M4 38.5H72" stroke="#000" stroke-dasharray="8 7"/><path d="M4 45.5H72" stroke="#000" stroke-dasharray="8 7"/><path d="M4 52.5H72" stroke="#fff" stroke-dasharray="8 7"/></g>
<g transform="translate(719,567)"><rect x="0" y="0" width="76" height="57" fill="#7f7f7f"/><rect x="1" y="7" width="74" height="43" fill="#deebf7"/><rect x="1" y="7" width="74" height="7" fill="#bdd7ee"/><rect x="1" y="28" width="74" height="7" fill="#bdd7ee"/><rect x="0.6" y="0.6" width="74.8" height="6.9" fill="#404040"/><rect x="0.6" y="49.3" width="74.8" height="7.1" fill="#404040"/><path d="M4 3.5H72" stroke="#fff" stroke-dasharray="8 7"/><path d="M4 10.5H72" stroke="#000" stroke-dasharray="8 7"/><path d="M4 17.5H72" stroke="#000" stroke-dasharray="8 7"/><path d="M4 24.5H72" stroke="#000" stroke-dasharray="8 7"/><path d="M4 31.5H72" stroke="#000" stroke-dasharray="8 7"/><path d="M4 38.5H72" stroke="#000" stroke-dasharray="8 7"/><path d="M4 45.5H72" stroke="#000" stroke-dasharray="8 7"/><path d="M4 52.5H72" stroke="#fff" stroke-dasharray="8 7"/></g>
<g transform="translate(805,567)"><rect x="0" y="0" width="76" height="57" fill="#7f7f7f"/><rect x="1" y="7" width="74" height="43" fill="#fbe5d6"/><rect x="1" y="7" width="74" height="7" fill="#f8cbad"/><rect x="1" y="28" width="74" height="7" fill="#f8cbad"/><rect x="0.6" y="0.6" width="74.8" height="6.9" fill="#404040"/><rect x="0.6" y="49.3" width="74.8" height="7.1" fill="#404040"/><path d="M4 3.5H72" stroke="#fff" stroke-dasharray="8 7"/><path d="M4 10.5H72" stroke="#000" stroke-dasharray="8 7"/><path d="M4 17.5H72" stroke="#000" stroke-dasharray="8 7"/><path d="M4 24.5H72" stroke="#000" stroke-dasharray="8 7"/><path d="M4 31.5H72" stroke="#000" stroke-dasharray="8 7"/><path d="M4 38.5H72" stroke="#000" stroke-dasharray="8 7"/><path d="M4 45.5H72" stroke="#000" stroke-dasharray="8 7"/><path d="M4 52.5H72" stroke="#fff" stroke-dasharray="8 7"/></g>
<g transform="translate(891,567)"><rect x="0" y="0" width="76" height="57" fill="#7f7f7f"/><rect x="1" y="7" width="74" height="43" fill="#ededed"/><rect x="1" y="7" width="74" height="7" fill="#dbdbdb"/><rect x="1" y="28" width="74" height="7" fill="#dbdbdb"/><rect x="0.6" y="0.6" width="74.8" height="6.9" fill="#404040"/><rect x="0.6" y="49.3" width="74.8" height="7.1" fill="#404040"/><path d="M4 3.5H72" stroke="#fff" stroke-dasharray="8 7"/><path d="M4 10.5H72" stroke="#000" stroke-dasharray="8 7"/><path d="M4 17.5H72" stroke="#000" stroke-dasharray="8 7"/><path d="M4 24.5H72" stroke="#000" stroke-dasharray="8 7"/><path d="M4 31.5H72" stroke="#000" stroke-dasharray="8 7"/><path d="M4 38.5H72" stroke="#000" stroke-dasharray="8 7"/><path d="M4 45.5H72" stroke="#000" stroke-dasharray="8 7"/><path d="M4 52.5H72" stroke="#fff" stroke-dasharray="8 7"/></g>
<g transform="translate(977,567)"><rect x="0" y="0" width="76" height="57" fill="#7f7f7f"/><rect x="1" y="7" width="74" height="43" fill="#fff2cc"/><rect x="1" y="7" width="74" height="7" fill="#ffe699"/><rect x="1" y="28" width="74" height="7" fill="#ffe699"/><rect x="0.6" y="0.6" width="74.8" height="6.9" fill="#404040"/><rect x="0.6" y="49.3" width="74.8" height="7.1" fill="#404040"/><path d="M4 3.5H72" stroke="#fff" stroke-dasharray="8 7"/><path d="M4 10.5H72" stroke="#000" stroke-dasharray="8 7"/><path d="M4 17.5H72" stroke="#000" stroke-dasharray="8 7"/><path d="M4 24.5H72" stroke="#000" stroke-dasharray="8 7"/><path d="M4 31.5H72" stroke="#000" stroke-dasharray="8 7"/><path d="M4 38.5H72" stroke="#000" stroke-dasharray="8 7"/><path d="M4 45.5H72" stroke="#000" stroke-dasharray="8 7"/><path d="M4 52.5H72" stroke="#fff" stroke-dasharray="8 7"/></g>
<g transform="translate(1063,567)"><rect x="0" y="0" width="76" height="57" fill="#7f7f7f"/><rect x="1" y="7" width="74" height="43" fill="#dae3f3"/><rect x="1" y="7" width="74" height="7" fill="#b4c7e7"/><rect x="1" y="28" width="74" height="7" fill="#b4c7e7"/><rect x="0.6" y="0.6" width="74.8" height="6.9" fill="#404040"/><rect x="0.6" y="49.3" width="74.8" height="7.1" fill="#404040"/><path d="M4 3.5H72" stroke="#fff" stroke-dasharray="8 7"/><path d="M4 10.5H72" stroke="#000" stroke-dasharray="8 7"/><path d="M4 17.5H72" stroke="#000" stroke-dasharray="8 7"/><path d="M4 24.5H72" stroke="#000" stroke-dasharray="8 7"/><path d="M4 31.5H72" stroke="#000" stroke-dasharray="8 7"/><path d="M4 38.5H72" stroke="#000" stroke-dasharray="8 7"/><path d="M4 45.5H72" stroke="#000" stroke-dasharray="8 7"/><path d="M4 52.5H72" stroke="#fff" stroke-dasharray="8 7"/></g>
<g transform="translate(1149,567)"><rect x="0" y="0" width="76" height="57" fill="#7f7f7f"/><rect x="1" y="7" width="74" height="43" fill="#e2f0d9"/><rect x="1" y="7" width="74" height="7" fill="#c5e0b4"/><rect x="1" y="28" width="74" height="7" fill="#c5e0b4"/><rect x="0.6" y="0.6" width="74.8" height="6.9" fill="#404040"/><rect x="0.6" y="49.3" width="74.8" height="7.1" fill="#404040"/><path d="M4 3.5H72" stroke="#fff" stroke-dasharray="8 7"/><path d="M4 10.5H72" stroke="#000" stroke-dasharray="8 7"/><path d="M4 17.5H72" stroke="#000" stroke-dasharray="8 7"/><path d="M4 24.5H72" stroke="#000" stroke-dasharray="8 7"/><path d="M4 31.5H72" stroke="#000" stroke-dasharray="8 7"/><path d="M4 38.5H72" stroke="#000" stroke-dasharray="8 7"/><path d="M4 45.5H72" stroke="#000" stroke-dasharray="8 7"/><path d="M4 52.5H72" stroke="#fff" stroke-dasharray="8 7"/></g>
<g transform="translate(633,634)"><rect x="0" y="0" width="76" height="57" fill="#000"/><rect x="0" y="7" width="76" height="42.3" fill="#8c8c8c"/><rect x="0" y="7" width="76" height="7" fill="#7f7f7f"/><rect x="0" y="28" width="76" height="7" fill="#7f7f7f"/><rect x="0" y="14" width="76" height="1" fill="#dde6f0"/><rect x="0" y="35" width="76" height="1" fill="#dde6f0"/><path d="M4 3.5H72" stroke="#fff" stroke-dasharray="8 7"/><path d="M4 10.5H72" stroke="#fff" stroke-dasharray="8 7"/><path d="M4 17.5H72" stroke="#d9d9d9" stroke-dasharray="8 7"/><path d="M4 24.5H72" stroke="#d9d9d9" stroke-dasharray="8 7"/><path d="M4 31.5H72" stroke="#fff" stroke-dasharray="8 7"/><path d="M4 38.5H72" stroke="#d9d9d9" stroke-dasharray="8 7"/><path d="M4 45.5H72" stroke="#d9d9d9" stroke-dasharray="8 7"/><path d="M4 52.5H72" stroke="#fff" stroke-dasharray="8 7"/></g>
<g transform="translate(719,634)"><rect x="0" y="0" width="76" height="57" fill="#000"/><rect x="0" y="7" width="76" height="42.3" fill="#5b9bd5"/><rect x="0" y="7" width="76" height="7" fill="#2e75b6"/><rect x="0" y="28" width="76" height="7" fill="#2e75b6"/><path d="M4 3.5H72" stroke="#fff" stroke-dasharray="8 7"/><path d="M4 10.5H72" stroke="#fff" stroke-dasharray="8 7"/><path d="M4 17.5H72" stroke="#deebf7" stroke-dasharray="8 7"/><path d="M4 24.5H72" stroke="#deebf7" stroke-dasharray="8 7"/><path d="M4 31.5H72" stroke="#fff" stroke-dasharray="8 7"/><path d="M4 38.5H72" stroke="#deebf7" stroke-dasharray="8 7"/><path d="M4 45.5H72" stroke="#deebf7" stroke-dasharray="8 7"/><path d="M4 52.5H72" stroke="#fff" stroke-dasharray="8 7"/></g>
<g transform="translate(805,634)"><rect x="0" y="0" width="76" height="57" fill="#000"/><rect x="0" y="7" width="76" height="42.3" fill="#ed7d31"/><rect x="0" y="7" width="76" height="7" fill="#c55a11"/><rect x="0" y="28" width="76" height="7" fill="#c55a11"/><path d="M4 3.5H72" stroke="#fff" stroke-dasharray="8 7"/><path d="M4 10.5H72" stroke="#fff" stroke-dasharray="8 7"/><path d="M4 17.5H72" stroke="#fbe5d6" stroke-dasharray="8 7"/><path d="M4 24.5H72" stroke="#fbe5d6" stroke-dasharray="8 7"/><path d="M4 31.5H72" stroke="#fff" stroke-dasharray="8 7"/><path d="M4 38.5H72" stroke="#fbe5d6" stroke-dasharray="8 7"/><path d="M4 45.5H72" stroke="#fbe5d6" stroke-dasharray="8 7"/><path d="M4 52.5H72" stroke="#fff" stroke-dasharray="8 7"/></g>
<g transform="translate(891,634)"><rect x="0" y="0" width="76" height="57" fill="#000"/><rect x="0" y="7" width="76" height="42.3" fill="#a5a5a5"/><rect x="0" y="7" width="76" height="7" fill="#7b7b7b"/><rect x="0" y="28" width="76" height="7" fill="#7b7b7b"/><path d="M4 3.5H72" stroke="#fff" stroke-dasharray="8 7"/><path d="M4 10.5H72" stroke="#fff" stroke-dasharray="8 7"/><path d="M4 17.5H72" stroke="#ededed" stroke-dasharray="8 7"/><path d="M4 24.5H72" stroke="#ededed" stroke-dasharray="8 7"/><path d="M4 31.5H72" stroke="#fff" stroke-dasharray="8 7"/><path d="M4 38.5H72" stroke="#ededed" stroke-dasharray="8 7"/><path d="M4 45.5H72" stroke="#ededed" stroke-dasharray="8 7"/><path d="M4 52.5H72" stroke="#fff" stroke-dasharray="8 7"/></g>
<g transform="translate(977,634)"><rect x="0" y="0" width="76" height="57" fill="#000"/><rect x="0" y="7" width="76" height="42.3" fill="#ffc000"/><rect x="0" y="7" width="76" height="7" fill="#bf9000"/><rect x="0" y="28" width="76" height="7" fill="#bf9000"/><path d="M4 3.5H72" stroke="#fff" stroke-dasharray="8 7"/><path d="M4 10.5H72" stroke="#fff" stroke-dasharray="8 7"/><path d="M4 17.5H72" stroke="#fff2cc" stroke-dasharray="8 7"/><path d="M4 24.5H72" stroke="#fff2cc" stroke-dasharray="8 7"/><path d="M4 31.5H72" stroke="#fff" stroke-dasharray="8 7"/><path d="M4 38.5H72" stroke="#fff2cc" stroke-dasharray="8 7"/><path d="M4 45.5H72" stroke="#fff2cc" stroke-dasharray="8 7"/><path d="M4 52.5H72" stroke="#fff" stroke-dasharray="8 7"/></g>
<g transform="translate(1063,634)"><rect x="0" y="0" width="76" height="57" fill="#000"/><rect x="0" y="7" width="76" height="42.3" fill="#4472c4"/><rect x="0" y="7" width="76" height="7" fill="#2f5597"/><rect x="0" y="28" width="76" height="7" fill="#2f5597"/><path d="M4 3.5H72" stroke="#fff" stroke-dasharray="8 7"/><path d="M4 10.5H72" stroke="#fff" stroke-dasharray="8 7"/><path d="M4 17.5H72" stroke="#dae3f3" stroke-dasharray="8 7"/><path d="M4 24.5H72" stroke="#dae3f3" stroke-dasharray="8 7"/><path d="M4 31.5H72" stroke="#fff" stroke-dasharray="8 7"/><path d="M4 38.5H72" stroke="#dae3f3" stroke-dasharray="8 7"/><path d="M4 45.5H72" stroke="#dae3f3" stroke-dasharray="8 7"/><path d="M4 52.5H72" stroke="#fff" stroke-dasharray="8 7"/></g>
<g transform="translate(1149,634)"><rect x="0" y="0" width="76" height="57" fill="#000"/><rect x="0" y="7" width="76" height="42.3" fill="#70ad47"/><rect x="0" y="7" width="76" height="7" fill="#548235"/><rect x="0" y="28" width="76" height="7" fill="#548235"/><path d="M4 3.5H72" stroke="#fff" stroke-dasharray="8 7"/><path d="M4 10.5H72" stroke="#fff" stroke-dasharray="8 7"/><path d="M4 17.5H72" stroke="#e2f0d9" stroke-dasharray="8 7"/><path d="M4 24.5H72" stroke="#e2f0d9" stroke-dasharray="8 7"/><path d="M4 31.5H72" stroke="#fff" stroke-dasharray="8 7"/><path d="M4 38.5H72" stroke="#e2f0d9" stroke-dasharray="8 7"/><path d="M4 45.5H72" stroke="#e2f0d9" stroke-dasharray="8 7"/><path d="M4 52.5H72" stroke="#fff" stroke-dasharray="8 7"/></g>
<g transform="translate(633,701)"><rect x="0" y="0" width="15" height="6.9" fill="#7f7f7f"/><rect x="0" y="8.1" width="15" height="40.7" fill="#7f7f7f"/><rect x="0" y="50" width="15" height="7" fill="#7f7f7f"/><rect x="16.1" y="0" width="13.9" height="6.9" fill="#7f7f7f"/><rect x="16.1" y="8.1" width="13.9" height="40.7" fill="#8c8c8c"/><rect x="16.1" y="50" width="13.9" height="7" fill="#8c8c8c"/><rect x="31.1" y="0" width="13.9" height="6.9" fill="#7f7f7f"/><rect x="31.1" y="8.1" width="13.9" height="40.7" fill="#8c8c8c"/><rect x="31.1" y="50" width="13.9" height="7" fill="#8c8c8c"/><rect x="46.1" y="0" width="13.9" height="6.9" fill="#7f7f7f"/><rect x="46.1" y="8.1" width="13.9" height="40.7" fill="#8c8c8c"/><rect x="46.1" y="50" width="13.9" height="7" fill="#8c8c8c"/><rect x="61.1" y="0" width="14.9" height="6.9" fill="#7f7f7f"/><rect x="61.1" y="8.1" width="14.9" height="40.7" fill="#8c8c8c"/><rect x="61.1" y="50" width="14.9" height="7" fill="#8c8c8c"/><path d="M4 3.5H72" stroke="#fff" stroke-dasharray="8 7"/><path d="M4 10.5H72" stroke="#fff" stroke-dasharray="8 7"/><path d="M4 17.5H72" stroke="#ddd" stroke-dasharray="8 7"/><path d="M4 24.5H72" stroke="#ddd" stroke-dasharray="8 7"/><path d="M4 31.5H72" stroke="#fff" stroke-dasharray="8 7"/><path d="M4 38.5H72" stroke="#ddd" stroke-dasharray="8 7"/><path d="M4 45.5H72" stroke="#ddd" stroke-dasharray="8 7"/><path d="M4 52.5H72" stroke="#fff" stroke-dasharray="8 7"/></g>
<g transform="translate(719,701)"><rect x="0" y="0" width="15" height="6.9" fill="#2e75b6"/><rect x="0" y="8.1" width="15" height="40.7" fill="#2e75b6"/><rect x="0" y="50" width="15" height="7" fill="#2e75b6"/><rect x="16.1" y="0" width="13.9" height="6.9" fill="#2e75b6"/><rect x="16.1" y="8.1" width="13.9" height="40.7" fill="#5b9bd5"/><rect x="16.1" y="50" width="13.9" height="7" fill="#5b9bd5"/><rect x="31.1" y="0" width="13.9" height="6.9" fill="#2e75b6"/><rect x="31.1" y="8.1" width="13.9" height="40.7" fill="#5b9bd5"/><rect x="31.1" y="50" width="13.9" height="7" fill="#5b9bd5"/><rect x="46.1" y="0" width="13.9" height="6.9" fill="#2e75b6"/><rect x="46.1" y="8.1" width="13.9" height="40.7" fill="#5b9bd5"/><rect x="46.1" y="50" width="13.9" height="7" fill="#5b9bd5"/><rect x="61.1" y="0" width="14.9" height="6.9" fill="#2e75b6"/><rect x="61.1" y="8.1" width="14.9" height="40.7" fill="#5b9bd5"/><rect x="61.1" y="50" width="14.9" height="7" fill="#5b9bd5"/><path d="M4 3.5H72" stroke="#fff" stroke-dasharray="8 7"/><path d="M4 10.5H72" stroke="#fff" stroke-dasharray="8 7"/><path d="M4 17.5H72" stroke="#deebf7" stroke-dasharray="8 7"/><path d="M4 24.5H72" stroke="#deebf7" stroke-dasharray="8 7"/><path d="M4 31.5H72" stroke="#fff" stroke-dasharray="8 7"/><path d="M4 38.5H72" stroke="#deebf7" stroke-dasharray="8 7"/><path d="M4 45.5H72" stroke="#deebf7" stroke-dasharray="8 7"/><path d="M4 52.5H72" stroke="#fff" stroke-dasharray="8 7"/></g>
<g transform="translate(805,701)"><rect x="0" y="0" width="15" height="6.9" fill="#c55a11"/><rect x="0" y="8.1" width="15" height="40.7" fill="#c55a11"/><rect x="0" y="50" width="15" height="7" fill="#c55a11"/><rect x="16.1" y="0" width="13.9" height="6.9" fill="#c55a11"/><rect x="16.1" y="8.1" width="13.9" height="40.7" fill="#ed7d31"/><rect x="16.1" y="50" width="13.9" height="7" fill="#ed7d31"/><rect x="31.1" y="0" width="13.9" height="6.9" fill="#c55a11"/><rect x="31.1" y="8.1" width="13.9" height="40.7" fill="#ed7d31"/><rect x="31.1" y="50" width="13.9" height="7" fill="#ed7d31"/><rect x="46.1" y="0" width="13.9" height="6.9" fill="#c55a11"/><rect x="46.1" y="8.1" width="13.9" height="40.7" fill="#ed7d31"/><rect x="46.1" y="50" width="13.9" height="7" fill="#ed7d31"/><rect x="61.1" y="0" width="14.9" height="6.9" fill="#c55a11"/><rect x="61.1" y="8.1" width="14.9" height="40.7" fill="#ed7d31"/><rect x="61.1" y="50" width="14.9" height="7" fill="#ed7d31"/><path d="M4 3.5H72" stroke="#fff" stroke-dasharray="8 7"/><path d="M4 10.5H72" stroke="#fff" stroke-dasharray="8 7"/><path d="M4 17.5H72" stroke="#fbe5d6" stroke-dasharray="8 7"/><path d="M4 24.5H72" stroke="#fbe5d6" stroke-dasharray="8 7"/><path d="M4 31.5H72" stroke="#fff" stroke-dasharray="8 7"/><path d="M4 38.5H72" stroke="#fbe5d6" stroke-dasharray="8 7"/><path d="M4 45.5H72" stroke="#fbe5d6" stroke-dasharray="8 7"/><path d="M4 52.5H72" stroke="#fff" stroke-dasharray="8 7"/></g>
<g transform="translate(891,701)"><rect x="0" y="0" width="15" height="6.9" fill="#7b7b7b"/><rect x="0" y="8.1" width="15" height="40.7" fill="#7b7b7b"/><rect x="0" y="50" width="15" height="7" fill="#7b7b7b"/><rect x="16.1" y="0" width="13.9" height="6.9" fill="#7b7b7b"/><rect x="16.1" y="8.1" width="13.9" height="40.7" fill="#a5a5a5"/><rect x="16.1" y="50" width="13.9" height="7" fill="#a5a5a5"/><rect x="31.1" y="0" width="13.9" height="6.9" fill="#7b7b7b"/><rect x="31.1" y="8.1" width="13.9" height="40.7" fill="#a5a5a5"/><rect x="31.1" y="50" width="13.9" height="7" fill="#a5a5a5"/><rect x="46.1" y="0" width="13.9" height="6.9" fill="#7b7b7b"/><rect x="46.1" y="8.1" width="13.9" height="40.7" fill="#a5a5a5"/><rect x="46.1" y="50" width="13.9" height="7" fill="#a5a5a5"/><rect x="61.1" y="0" width="14.9" height="6.9" fill="#7b7b7b"/><rect x="61.1" y="8.1" width="14.9" height="40.7" fill="#a5a5a5"/><rect x="61.1" y="50" width="14.9" height="7" fill="#a5a5a5"/><path d="M4 3.5H72" stroke="#fff" stroke-dasharray="8 7"/><path d="M4 10.5H72" stroke="#fff" stroke-dasharray="8 7"/><path d="M4 17.5H72" stroke="#ededed" stroke-dasharray="8 7"/><path d="M4 24.5H72" stroke="#ededed" stroke-dasharray="8 7"/><path d="M4 31.5H72" stroke="#fff" stroke-dasharray="8 7"/><path d="M4 38.5H72" stroke="#ededed" stroke-dasharray="8 7"/><path d="M4 45.5H72" stroke="#ededed" stroke-dasharray="8 7"/><path d="M4 52.5H72" stroke="#fff" stroke-dasharray="8 7"/></g>
<g transform="translate(977,701)"><rect x="0" y="0" width="15" height="6.9" fill="#bf9000"/><rect x="0" y="8.1" width="15" height="40.7" fill="#bf9000"/><rect x="0" y="50" width="15" height="7" fill="#bf9000"/><rect x="16.1" y="0" width="13.9" height="6.9" fill="#bf9000"/><rect x="16.1" y="8.1" width="13.9" height="40.7" fill="#ffc000"/><rect x="16.1" y="50" width="13.9" height="7" fill="#ffc000"/><rect x="31.1" y="0" width="13.9" height="6.9" fill="#bf9000"/><rect x="31.1" y="8.1" width="13.9" height="40.7" fill="#ffc000"/><rect x="31.1" y="50" width="13.9" height="7" fill="#ffc000"/><rect x="46.1" y="0" width="13.9" height="6.9" fill="#bf9000"/><rect x="46.1" y="8.1" width="13.9" height="40.7" fill="#ffc000"/><rect x="46.1" y="50" width="13.9" height="7" fill="#ffc000"/><rect x="61.1" y="0" width="14.9" height="6.9" fill="#bf9000"/><rect x="61.1" y="8.1" width="14.9" height="40.7" fill="#ffc000"/><rect x="61.1" y="50" width="14.9" height="7" fill="#ffc000"/><path d="M4 3.5H72" stroke="#fff" stroke-dasharray="8 7"/><path d="M4 10.5H72" stroke="#fff" stroke-dasharray="8 7"/><path d="M4 17.5H72" stroke="#fff2cc" stroke-dasharray="8 7"/><path d="M4 24.5H72" stroke="#fff2cc" stroke-dasharray="8 7"/><path d="M4 31.5H72" stroke="#fff" stroke-dasharray="8 7"/><path d="M4 38.5H72" stroke="#fff2cc" stroke-dasharray="8 7"/><path d="M4 45.5H72" stroke="#fff2cc" stroke-dasharray="8 7"/><path d="M4 52.5H72" stroke="#fff" stroke-dasharray="8 7"/></g>
<g transform="translate(1063,701)"><rect x="0" y="0" width="15" height="6.9" fill="#2f5597"/><rect x="0" y="8.1" width="15" height="40.7" fill="#2f5597"/><rect x="0" y="50" width="15" height="7" fill="#2f5597"/><rect x="16.1" y="0" width="13.9" height="6.9" fill="#2f5597"/><rect x="16.1" y="8.1" width="13.9" height="40.7" fill="#4472c4"/><rect x="16.1" y="50" width="13.9" height="7" fill="#4472c4"/><rect x="31.1" y="0" width="13.9" height="6.9" fill="#2f5597"/><rect x="31.1" y="8.1" width="13.9" height="40.7" fill="#4472c4"/><rect x="31.1" y="50" width="13.9" height="7" fill="#4472c4"/><rect x="46.1" y="0" width="13.9" height="6.9" fill="#2f5597"/><rect x="46.1" y="8.1" width="13.9" height="40.7" fill="#4472c4"/><rect x="46.1" y="50" width="13.9" height="7" fill="#4472c4"/><rect x="61.1" y="0" width="14.9" height="6.9" fill="#2f5597"/><rect x="61.1" y="8.1" width="14.9" height="40.7" fill="#4472c4"/><rect x="61.1" y="50" width="14.9" height="7" fill="#4472c4"/><path d="M4 3.5H72" stroke="#fff" stroke-dasharray="8 7"/><path d="M4 10.5H72" stroke="#fff" stroke-dasharray="8 7"/><path d="M4 17.5H72" stroke="#dae3f3" stroke-dasharray="8 7"/><path d="M4 24.5H72" stroke="#dae3f3" stroke-dasharray="8 7"/><path d="M4 31.5H72" stroke="#fff" stroke-dasharray="8 7"/><path d="M4 38.5H72" stroke="#dae3f3" stroke-dasharray="8 7"/><path d="M4 45.5H72" stroke="#dae3f3" stroke-dasharray="8 7"/><path d="M4 52.5H72" stroke="#fff" stroke-dasharray="8 7"/></g>
<g transform="translate(1149,701)"><rect x="0" y="0" width="15" height="6.9" fill="#548235"/><rect x="0" y="8.1" width="15" height="40.7" fill="#548235"/><rect x="0" y="50" width="15" height="7" fill="#548235"/><rect x="16.1" y="0" width="13.9" height="6.9" fill="#548235"/><rect x="16.1" y="8.1" width="13.9" height="40.7" fill="#70ad47"/><rect x="16.1" y="50" width="13.9" height="7" fill="#70ad47"/><rect x="31.1" y="0" width="13.9" height="6.9" fill="#548235"/><rect x="31.1" y="8.1" width="13.9" height="40.7" fill="#70ad47"/><rect x="31.1" y="50" width="13.9" height="7" fill="#70ad47"/><rect x="46.1" y="0" width="13.9" height="6.9" fill="#548235"/><rect x="46.1" y="8.1" width="13.9" height="40.7" fill="#70ad47"/><rect x="46.1" y="50" width="13.9" height="7" fill="#70ad47"/><rect x="61.1" y="0" width="14.9" height="6.9" fill="#548235"/><rect x="61.1" y="8.1" width="14.9" height="40.7" fill="#70ad47"/><rect x="61.1" y="50" width="14.9" height="7" fill="#70ad47"/><path d="M4 3.5H72" stroke="#fff" stroke-dasharray="8 7"/><path d="M4 10.5H72" stroke="#fff" stroke-dasharray="8 7"/><path d="M4 17.5H72" stroke="#e2f0d9" stroke-dasharray="8 7"/><path d="M4 24.5H72" stroke="#e2f0d9" stroke-dasharray="8 7"/><path d="M4 31.5H72" stroke="#fff" stroke-dasharray="8 7"/><path d="M4 38.5H72" stroke="#e2f0d9" stroke-dasharray="8 7"/><path d="M4 45.5H72" stroke="#e2f0d9" stroke-dasharray="8 7"/><path d="M4 52.5H72" stroke="#fff" stroke-dasharray="8 7"/></g>
</svg>
<div class="b" style="left:626px;top:761px;width:211px;height:42px;border:5px solid #ed1c24"></div>
<div class="t" style="left:672.53px;top:773.43px;font:15.5px/20px 'Liberation Sans',sans-serif;color:#222;letter-spacing:-0.443px;">New PivotTable Style...</div>
<div class="b" style="left:706.7px;top:790.6px;width:9.4px;height:1px;background:#222"></div>
<div class="t" style="left:672.81px;top:809.63px;font:15.5px/20px 'Liberation Sans',sans-serif;color:#222;letter-spacing:-0.699px;">Clear</div>
<div class="b" style="left:673.5px;top:826.8px;width:9.8px;height:1px;background:#222"></div>
<svg style="left:641px;top:771px" width="22" height="22" viewBox="0 0 22 22">
<rect x="1.5" y="1.5" width="19" height="19" fill="#f6f6f6" stroke="#3d3d3d" stroke-width="1.2"/>
<rect x="0" y="0" width="9.4" height="9.4" fill="#fff"/>
<path d="M5.2 1.2V9.2M1.2 5.2H9.2" stroke="#2e9e4f" stroke-width="1.4" fill="none"/>
<rect x="11.4" y="4.2" width="7.4" height="2.6" rx="1.1" fill="#d0d0d0" stroke="#8e8e8e" stroke-width="0.9"/>
<rect x="3.9" y="11.4" width="2.8" height="6.6" rx="1.1" fill="#d0d0d0" stroke="#8e8e8e" stroke-width="0.9"/>
<path d="M10.8 16.6H16.8V9.8" stroke="#1e88e0" stroke-width="1.25" fill="none"/>
<path d="M12.8 14.5L10.5 16.6L12.8 18.7" stroke="#1e88e0" stroke-width="1.25" fill="none"/>
<path d="M14.7 11.8L16.8 9.4L18.9 11.8" stroke="#1e88e0" stroke-width="1.25" fill="none"/>
</svg>
<svg style="left:641px;top:808px" width="23" height="22" viewBox="0 0 23 22">
<rect x="1.6" y="1.9" width="19" height="16.4" fill="#fff" stroke="#6f6f6f" stroke-width="1.2"/>
<path d="M7.4 1.9V18.3M14.2 1.9V18.3M1.6 6.2H20.6M1.6 12.2H20.6" stroke="#7d7d7d" stroke-width="1.2" fill="none"/>
<path d="M7.2 6H21.2V18.9H7.2Z" fill="#1b6ec2"/>
<path d="M8.3 7.1H17.6L8.3 16.4Z" fill="#9ccbf4"/>
<path d="M10 18.9L21.2 7.7V18.9Z" fill="#fff"/>
<path d="M18.6 18.9H21.2V16.3Z" fill="#1b6ec2"/>
<g transform="translate(14.9,13.8) rotate(-45)"><rect x="-6.2" y="-3.9" width="12.4" height="7.8" fill="#fff"/><rect x="-5.2" y="-2.9" width="10.4" height="5.8" fill="#fff" stroke="#a23bb4" stroke-width="1.4"/><rect x="-5.2" y="-2.9" width="3.4" height="5.8" fill="#a23bb4"/></g>
</svg>
<div class="b" style="left:1258px;top:840px;width:2px;height:2px;background:#929292"></div>
<div class="b" style="left:1253px;top:845px;width:2px;height:2px;background:#929292"></div>
<div class="b" style="left:1258px;top:845px;width:2px;height:2px;background:#929292"></div>
<div class="b" style="left:1266px;top:170px;width:19px;height:10px;background:linear-gradient(#dadada,#ececec)"></div>
<div class="b" style="left:1266px;top:180px;width:19px;height:29px;background:#fff"></div>
<div class="b" style="left:1266px;top:209px;width:19px;height:29px;background:#efefef;border-top:1px solid #dcdcdc"></div>
<div class="b" style="left:1266px;top:238px;width:19px;height:1px;background:#9b9b9b"></div>
<div class="t" style="left:1271.60px;top:220.30px;font:13px/17px 'Liberation Sans',sans-serif;color:#3a4a5a;letter-spacing:0.000px;">N</div>
</div></body></html>
